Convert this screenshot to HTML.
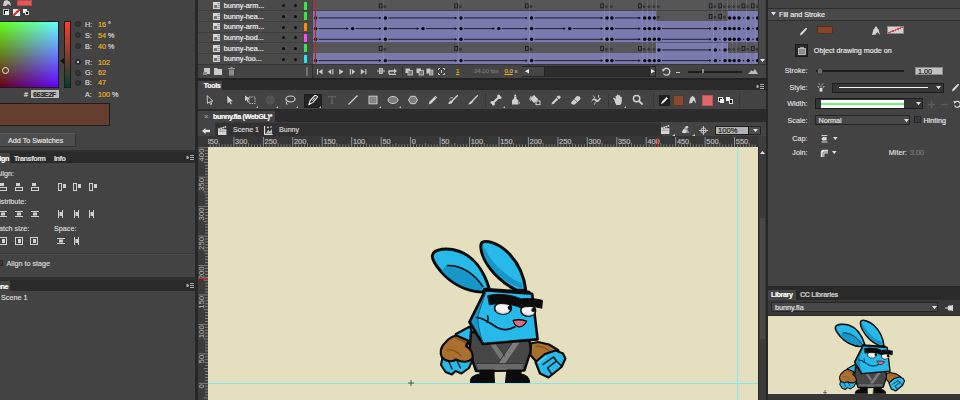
<!DOCTYPE html>
<html lang="en">
<head>
<meta charset="utf-8">
<title>bunny.fla (WebGL)*</title>
<style>
*{box-sizing:border-box;margin:0;padding:0}
html,body{width:960px;height:400px;overflow:hidden;background:#434343}
body{position:relative;font-family:"Liberation Sans",sans-serif;font-size:7.2px;color:#dadada;line-height:1}
.a{position:absolute}
.t{position:absolute;white-space:nowrap;line-height:9px;height:9px;-webkit-text-stroke:0.18px}
.b{font-weight:bold;letter-spacing:-0.4px}
.y{color:#eab21c}
.g{color:#8c8c8c}
svg{position:absolute;overflow:visible}
</style>
</head>
<body>
<!-- left panel -->
<div class="a" style="left:0px;top:0px;width:195px;height:400px;background:#434343;"></div>
<svg style="left:1px;top:0px" width="12" height="7" viewBox="0 0 12 7"><path d="M2 6 L3 1 L6 0 L9 2 L10 6 L7 4 L5 6 Z" fill="#cfcfcf"/></svg>
<div class="a" style="left:17px;top:0px;width:15px;height:6px;background:#e0585a;border:1px solid #b84848"></div>
<div class="a" style="left:3px;top:9px;width:6px;height:6px;background:#111;border:1px solid #bbb"></div>
<div class="a" style="left:5px;top:11px;width:4px;height:4px;background:#eee;"></div>
<div class="a" style="left:13px;top:9px;width:7px;height:7px;background:linear-gradient(135deg,#f4f4f4 42%,#e03030 42%,#e03030 58%,#f4f4f4 58%);"></div>
<div class="a" style="left:23px;top:9px;width:4px;height:4px;background:#eee;"></div>
<div class="a" style="left:25px;top:11px;width:4px;height:4px;background:#111;border:1px solid #ccc"></div>
<div class="a" style="left:-7px;top:21px;width:66px;height:67px;background:linear-gradient(to right,#000,#00f),linear-gradient(to bottom,#0f0,#000),#660000;border:1px solid #1c1c1c;background-blend-mode:screen"></div>
<div class="a" style="left:2px;top:67px;width:7px;height:7px;background:transparent;border:1px solid #e8e8d0;border-radius:50%"></div>
<div class="a" style="left:64px;top:21px;width:7px;height:67px;background:linear-gradient(to bottom,#ff3e2f,#003e2f);border:1px solid #1c1c1c"></div>
<svg style="left:60px;top:58px" width="4" height="6" viewBox="0 0 4 6"><path d="M0 3 L4 0 L4 6 Z" fill="#111"/></svg>
<div class="a" style="left:75px;top:21px;width:6px;height:6px;background:#333;border-radius:50%;border:1px solid #2a2a2a"></div>
<div class="t " style="left:85px;top:19.5px;">H:</div>
<div class="t " style="left:98px;top:19.5px;"><span class="y">16</span> °</div>
<div class="a" style="left:75px;top:32px;width:6px;height:6px;background:#333;border-radius:50%;border:1px solid #2a2a2a"></div>
<div class="t " style="left:85px;top:30.5px;">S:</div>
<div class="t " style="left:98px;top:30.5px;"><span class="y">54</span> %</div>
<div class="a" style="left:75px;top:43px;width:6px;height:6px;background:#333;border-radius:50%;border:1px solid #2a2a2a"></div>
<div class="t " style="left:85px;top:41.5px;">B:</div>
<div class="t " style="left:98px;top:41.5px;"><span class="y">40</span> %</div>
<div class="a" style="left:75px;top:59px;width:6px;height:6px;background:#333;border-radius:50%;border:1px solid #2a2a2a"></div>
<div class="a" style="left:77px;top:61px;width:2px;height:2px;background:#eee;border-radius:50%"></div>
<div class="t " style="left:85px;top:57.5px;">R:</div>
<div class="t " style="left:98px;top:57.5px;"><span class="y">102</span> </div>
<div class="a" style="left:75px;top:69.7px;width:6px;height:6px;background:#333;border-radius:50%;border:1px solid #2a2a2a"></div>
<div class="t " style="left:85px;top:68.2px;">G:</div>
<div class="t " style="left:98px;top:68.2px;"><span class="y">62</span> </div>
<div class="a" style="left:75px;top:79.7px;width:6px;height:6px;background:#333;border-radius:50%;border:1px solid #2a2a2a"></div>
<div class="t " style="left:85px;top:78.2px;">B:</div>
<div class="t " style="left:98px;top:78.2px;"><span class="y">47</span> </div>
<div class="t " style="left:85px;top:89.5px;">A:</div>
<div class="t " style="left:98px;top:89.5px;"><span class="y">100</span> %</div>
<div class="t " style="left:24px;top:89.5px;">#</div>
<div class="a" style="left:31px;top:90px;width:28px;height:8px;background:#bcbcbc;"></div>
<div class="t b" style="left:33px;top:89.5px;color:#222">663E2F</div>
<div class="a" style="left:-1px;top:103px;width:111px;height:23px;background:#663e2f;border:1px solid #1e1e1e"></div>
<div class="a" style="left:-1px;top:133px;width:77px;height:14px;background:#4d4d4d;border:1px solid #333;border-top-color:#5a5a5a;border-radius:1px"></div>
<div class="t " style="left:8px;top:135.5px;color:#e2e2e2">Add To Swatches</div>
<div class="a" style="left:0px;top:150px;width:195px;height:13px;background:#2a2a2a;border-top:2px solid #303030"></div>
<div class="a" style="left:0px;top:153px;width:10px;height:10px;background:#434343;"></div>
<div class="t b" style="left:-7px;top:153.5px;color:#fff">Align</div>
<div class="t b" style="left:14px;top:153.5px;">Transform</div>
<div class="t b" style="left:54px;top:153.5px;">Info</div>
<svg style="left:187px;top:155px" width="7" height="5" viewBox="0 0 7 5"><path d="M0 1 L2 2.5 L0 4Z M3 0.5h4 M3 2.5h4 M3 4.5h4" stroke="#aaa" stroke-width="1" fill="#aaa"/></svg>
<div class="t " style="left:-4px;top:168.5px;">Align:</div>
<div class="t " style="left:-6px;top:196.5px;">Distribute:</div>
<div class="t " style="left:-7px;top:223.5px;">Match size:</div>
<div class="t " style="left:54px;top:223.5px;">Space:</div>
<div class="a" style="left:0px;top:253px;width:195px;height:1px;background:#383838;"></div>
<div class="a" style="left:0px;top:254px;width:195px;height:1px;background:#4c4c4c;"></div>
<div class="a" style="left:-3px;top:260px;width:6px;height:6px;background:#383838;border:1px solid #2a2a2a"></div>
<div class="t " style="left:6.5px;top:258.5px;">Align to stage</div>
<div class="a" style="left:0px;top:277px;width:195px;height:14px;background:#2a2a2a;border-top:3px solid #303030"></div>
<div class="a" style="left:0px;top:281px;width:10px;height:10px;background:#434343;"></div>
<div class="t b" style="left:-11px;top:281.5px;color:#fff">Scene</div>
<svg style="left:187px;top:283px" width="7" height="5" viewBox="0 0 7 5"><path d="M0 1 L2 2.5 L0 4Z M3 0.5h4 M3 2.5h4 M3 4.5h4" stroke="#aaa" stroke-width="1" fill="#aaa"/></svg>
<div class="t " style="left:1px;top:292.5px;">Scene 1</div>
<svg style="left:-1px;top:183px" width="8" height="8" viewBox="0 0 8 8"><rect x="1" y="0" width="4" height="3" fill="#d0d0d0"/><rect x="0.5" y="4.5" width="7" height="3" fill="none" stroke="#d0d0d0"/></svg>
<svg style="left:14.5px;top:183px" width="8" height="8" viewBox="0 0 8 8"><rect x="1" y="0" width="4" height="3" fill="#d0d0d0"/><rect x="0.5" y="4.5" width="7" height="3" fill="none" stroke="#d0d0d0"/></svg>
<svg style="left:31px;top:183px" width="8" height="8" viewBox="0 0 8 8"><rect x="1" y="0" width="4" height="3" fill="#d0d0d0"/><rect x="0.5" y="4.5" width="7" height="3" fill="none" stroke="#d0d0d0"/></svg>
<svg style="left:57.5px;top:183px" width="8" height="8" viewBox="0 0 8 8"><rect x="0.5" y="0.5" width="3" height="7" fill="none" stroke="#d0d0d0"/><rect x="5" y="1" width="3" height="4" fill="#d0d0d0"/></svg>
<svg style="left:73px;top:183px" width="8" height="8" viewBox="0 0 8 8"><rect x="0.5" y="0.5" width="3" height="7" fill="none" stroke="#d0d0d0"/><rect x="5" y="1" width="3" height="4" fill="#d0d0d0"/></svg>
<svg style="left:89px;top:183px" width="8" height="8" viewBox="0 0 8 8"><rect x="0.5" y="0.5" width="3" height="7" fill="none" stroke="#d0d0d0"/><rect x="5" y="1" width="3" height="4" fill="#d0d0d0"/></svg>
<svg style="left:-1px;top:210px" width="8" height="8" viewBox="0 0 8 8"><path d="M0 1.5h8 M0 6.5h8" stroke="#d0d0d0"/><rect x="2" y="2.5" width="4" height="3" fill="#d0d0d0"/></svg>
<svg style="left:14.5px;top:210px" width="8" height="8" viewBox="0 0 8 8"><path d="M0 1.5h8 M0 6.5h8" stroke="#d0d0d0"/><rect x="2" y="2.5" width="4" height="3" fill="#d0d0d0"/></svg>
<svg style="left:31px;top:210px" width="8" height="8" viewBox="0 0 8 8"><path d="M0 1.5h8 M0 6.5h8" stroke="#d0d0d0"/><rect x="2" y="2.5" width="4" height="3" fill="#d0d0d0"/></svg>
<svg style="left:57px;top:210px" width="8" height="8" viewBox="0 0 8 8"><path d="M1.5 0v8 M5.5 0v8" stroke="#d0d0d0"/><rect x="2.5" y="2" width="3" height="4" fill="#d0d0d0"/></svg>
<svg style="left:73px;top:210px" width="8" height="8" viewBox="0 0 8 8"><path d="M1.5 0v8 M5.5 0v8" stroke="#d0d0d0"/><rect x="2.5" y="2" width="3" height="4" fill="#d0d0d0"/></svg>
<svg style="left:88px;top:210px" width="8" height="8" viewBox="0 0 8 8"><path d="M1.5 0v8 M5.5 0v8" stroke="#d0d0d0"/><rect x="2.5" y="2" width="3" height="4" fill="#d0d0d0"/></svg>
<svg style="left:-1px;top:237px" width="8" height="8" viewBox="0 0 8 8"><rect x="0.5" y="0.5" width="7" height="7" fill="none" stroke="#d0d0d0"/><rect x="3" y="2" width="3" height="4" fill="#d0d0d0"/></svg>
<svg style="left:15px;top:237px" width="8" height="8" viewBox="0 0 8 8"><rect x="0.5" y="0.5" width="7" height="7" fill="none" stroke="#d0d0d0"/><rect x="3" y="2" width="3" height="4" fill="#d0d0d0"/></svg>
<svg style="left:30px;top:237px" width="8" height="8" viewBox="0 0 8 8"><rect x="0.5" y="0.5" width="7" height="7" fill="none" stroke="#d0d0d0"/><rect x="3" y="2" width="3" height="4" fill="#d0d0d0"/></svg>
<svg style="left:57px;top:237px" width="8" height="8" viewBox="0 0 8 8"><path d="M0 1.5h8 M0 6.5h8" stroke="#d0d0d0"/><rect x="2" y="2.5" width="4" height="3" fill="#d0d0d0"/></svg>
<svg style="left:73px;top:237px" width="8" height="8" viewBox="0 0 8 8"><path d="M1.5 0v8 M5.5 0v8" stroke="#d0d0d0"/><rect x="2.5" y="2" width="3" height="4" fill="#d0d0d0"/></svg>
<div class="a" style="left:194.8px;top:0px;width:3.6px;height:400px;background:#272727;"></div>
<!-- timeline -->
<div class="a" style="left:198.4px;top:0px;width:567.6px;height:400px;background:#434343;"></div>
<div class="a" style="left:198.4px;top:0px;width:114.1px;height:64px;background:#4a4a4a;"></div>
<div class="a" style="left:312.5px;top:0px;width:445.79999999999995px;height:64px;background:#565656;"></div>
<div class="a" style="left:198.4px;top:10.17px;width:114.1px;height:1px;background:#3e3e3e;"></div>
<svg style="left:213px;top:2.13px" width="7" height="7" viewBox="0 0 7 7"><rect x="0" y="0" width="7" height="7" fill="#d8d8d8"/><rect x="1" y="3" width="3" height="3" fill="#777"/><path d="M4.5 1.5h2 M4.5 3.5h2 M4.5 5.5h2" stroke="#777" stroke-width="0.8"/></svg>
<div class="t " style="left:223.8px;top:0.8300000000000001px;color:#f0f0f0">bunny-arm...</div>
<div class="a" style="left:282.3px;top:4.23px;width:3px;height:3px;background:#0c0c0c;border-radius:50%"></div>
<div class="a" style="left:293.6px;top:4.23px;width:3px;height:3px;background:#0c0c0c;border-radius:50%"></div>
<div class="a" style="left:304px;top:1.63px;width:3.4px;height:8px;background:#3fe04a;border-radius:0.5px"></div>
<div class="a" style="left:312.5px;top:10.17px;width:445.79999999999995px;height:0.8px;background:rgba(40,40,60,0.45);"></div>
<div class="a" style="left:198.4px;top:20.84px;width:114.1px;height:1px;background:#3e3e3e;"></div>
<svg style="left:213px;top:12.8px" width="7" height="7" viewBox="0 0 7 7"><rect x="0" y="0" width="7" height="7" fill="#d8d8d8"/><rect x="1" y="3" width="3" height="3" fill="#777"/><path d="M4.5 1.5h2 M4.5 3.5h2 M4.5 5.5h2" stroke="#777" stroke-width="0.8"/></svg>
<div class="t " style="left:223.8px;top:11.5px;color:#f0f0f0">bunny-hea...</div>
<div class="a" style="left:282.3px;top:14.9px;width:3px;height:3px;background:#0c0c0c;border-radius:50%"></div>
<div class="a" style="left:293.6px;top:14.9px;width:3px;height:3px;background:#0c0c0c;border-radius:50%"></div>
<div class="a" style="left:304px;top:12.3px;width:3.4px;height:8px;background:#3fe04a;border-radius:0.5px"></div>
<div class="a" style="left:312.5px;top:10.67px;width:343.6px;height:10.67px;background:#7a7aae;"></div>
<div class="a" style="left:728px;top:10.67px;width:30.3px;height:10.67px;background:#7a7aae;"></div>
<div class="a" style="left:312.5px;top:20.84px;width:445.79999999999995px;height:0.8px;background:rgba(40,40,60,0.45);"></div>
<div class="a" style="left:198.4px;top:31.51px;width:114.1px;height:1px;background:#3e3e3e;"></div>
<svg style="left:213px;top:23.48px" width="7" height="7" viewBox="0 0 7 7"><rect x="0" y="0" width="7" height="7" fill="#d8d8d8"/><rect x="1" y="3" width="3" height="3" fill="#777"/><path d="M4.5 1.5h2 M4.5 3.5h2 M4.5 5.5h2" stroke="#777" stroke-width="0.8"/></svg>
<div class="t " style="left:223.8px;top:22.18px;color:#f0f0f0">bunny-arm...</div>
<div class="a" style="left:282.3px;top:25.58px;width:3px;height:3px;background:#0c0c0c;border-radius:50%"></div>
<div class="a" style="left:293.6px;top:25.58px;width:3px;height:3px;background:#0c0c0c;border-radius:50%"></div>
<div class="a" style="left:304px;top:22.98px;width:3.4px;height:8px;background:#ff8a10;border-radius:0.5px"></div>
<div class="a" style="left:312.5px;top:21.34px;width:445.8px;height:10.67px;background:#7a7aae;"></div>
<div class="a" style="left:312.5px;top:31.51px;width:445.79999999999995px;height:0.8px;background:rgba(40,40,60,0.45);"></div>
<div class="a" style="left:198.4px;top:42.18px;width:114.1px;height:1px;background:#3e3e3e;"></div>
<svg style="left:213px;top:34.14px" width="7" height="7" viewBox="0 0 7 7"><rect x="0" y="0" width="7" height="7" fill="#d8d8d8"/><rect x="1" y="3" width="3" height="3" fill="#777"/><path d="M4.5 1.5h2 M4.5 3.5h2 M4.5 5.5h2" stroke="#777" stroke-width="0.8"/></svg>
<div class="t " style="left:223.8px;top:32.84px;color:#f0f0f0">bunny-bod...</div>
<div class="a" style="left:282.3px;top:36.24px;width:3px;height:3px;background:#0c0c0c;border-radius:50%"></div>
<div class="a" style="left:293.6px;top:36.24px;width:3px;height:3px;background:#0c0c0c;border-radius:50%"></div>
<div class="a" style="left:304px;top:33.64px;width:3.4px;height:8px;background:#f050f0;border-radius:0.5px"></div>
<div class="a" style="left:312.5px;top:32.01px;width:445.8px;height:10.67px;background:#7a7aae;"></div>
<div class="a" style="left:312.5px;top:42.18px;width:445.79999999999995px;height:0.8px;background:rgba(40,40,60,0.45);"></div>
<div class="a" style="left:198.4px;top:52.85px;width:114.1px;height:1px;background:#3e3e3e;"></div>
<svg style="left:213px;top:44.81px" width="7" height="7" viewBox="0 0 7 7"><rect x="0" y="0" width="7" height="7" fill="#d8d8d8"/><rect x="1" y="3" width="3" height="3" fill="#777"/><path d="M4.5 1.5h2 M4.5 3.5h2 M4.5 5.5h2" stroke="#777" stroke-width="0.8"/></svg>
<div class="t " style="left:223.8px;top:43.52px;color:#f0f0f0">bunny-hea...</div>
<div class="a" style="left:282.3px;top:46.91px;width:3px;height:3px;background:#0c0c0c;border-radius:50%"></div>
<div class="a" style="left:293.6px;top:46.91px;width:3px;height:3px;background:#0c0c0c;border-radius:50%"></div>
<div class="a" style="left:304px;top:44.31px;width:3.4px;height:8px;background:#3fe04a;border-radius:0.5px"></div>
<div class="a" style="left:656.1px;top:42.68px;width:71.9px;height:10.67px;background:#7a7aae;"></div>
<div class="a" style="left:312.5px;top:52.85px;width:445.79999999999995px;height:0.8px;background:rgba(40,40,60,0.45);"></div>
<div class="a" style="left:198.4px;top:63.52px;width:114.1px;height:1px;background:#3e3e3e;"></div>
<svg style="left:213px;top:55.48px" width="7" height="7" viewBox="0 0 7 7"><rect x="0" y="0" width="7" height="7" fill="#d8d8d8"/><rect x="1" y="3" width="3" height="3" fill="#777"/><path d="M4.5 1.5h2 M4.5 3.5h2 M4.5 5.5h2" stroke="#777" stroke-width="0.8"/></svg>
<div class="t " style="left:223.8px;top:54.19px;color:#f0f0f0">bunny-foo...</div>
<div class="a" style="left:282.3px;top:57.59px;width:3px;height:3px;background:#0c0c0c;border-radius:50%"></div>
<div class="a" style="left:293.6px;top:57.59px;width:3px;height:3px;background:#0c0c0c;border-radius:50%"></div>
<div class="a" style="left:304px;top:54.98px;width:3.4px;height:8px;background:#30e0f0;border-radius:0.5px"></div>
<div class="a" style="left:312.5px;top:53.35px;width:445.8px;height:10.67px;background:#7a7aae;"></div>
<div class="a" style="left:312.5px;top:63.52px;width:445.79999999999995px;height:0.8px;background:rgba(40,40,60,0.45);"></div>
<div class="a" style="left:382.8px;top:0px;width:0.6px;height:64px;background:rgba(200,200,230,0.13);"></div>
<div class="a" style="left:458.4px;top:0px;width:0.6px;height:64px;background:rgba(200,200,230,0.13);"></div>
<div class="a" style="left:529.0px;top:0px;width:0.6px;height:64px;background:rgba(200,200,230,0.13);"></div>
<div class="a" style="left:604.4px;top:0px;width:0.6px;height:64px;background:rgba(200,200,230,0.13);"></div>
<div class="a" style="left:609.3px;top:0px;width:0.6px;height:64px;background:rgba(200,200,230,0.13);"></div>
<div class="a" style="left:642.1px;top:0px;width:0.6px;height:64px;background:rgba(200,200,230,0.13);"></div>
<div class="a" style="left:646.8px;top:0px;width:0.6px;height:64px;background:rgba(200,200,230,0.13);"></div>
<div class="a" style="left:651.7px;top:0px;width:0.6px;height:64px;background:rgba(200,200,230,0.13);"></div>
<div class="a" style="left:656.4px;top:0px;width:0.6px;height:64px;background:rgba(200,200,230,0.13);"></div>
<div class="a" style="left:712.8px;top:0px;width:0.6px;height:64px;background:rgba(200,200,230,0.13);"></div>
<div class="a" style="left:722.4px;top:0px;width:0.6px;height:64px;background:rgba(200,200,230,0.13);"></div>
<div class="a" style="left:727.1px;top:0px;width:0.6px;height:64px;background:rgba(200,200,230,0.13);"></div>
<div class="a" style="left:731.6px;top:0px;width:0.6px;height:64px;background:rgba(200,200,230,0.13);"></div>
<div class="a" style="left:736.4px;top:0px;width:0.6px;height:64px;background:rgba(200,200,230,0.13);"></div>
<div class="a" style="left:745.6px;top:0px;width:0.6px;height:64px;background:rgba(200,200,230,0.13);"></div>
<div class="a" style="left:755.0px;top:0px;width:0.6px;height:64px;background:rgba(200,200,230,0.13);"></div>
<svg style="left:0;top:0" width="960" height="64" viewBox="0 0 960 64"><rect x="379.2" y="3.86" width="2.8" height="4" fill="none" stroke="#1c1c1c" stroke-width="0.9"/><circle cx="384.8" cy="6.66" r="1" fill="none" stroke="#222" stroke-width="0.8"/><rect x="454.8" y="3.86" width="2.8" height="4" fill="none" stroke="#1c1c1c" stroke-width="0.9"/><circle cx="460.4" cy="6.66" r="1" fill="none" stroke="#222" stroke-width="0.8"/><rect x="525.4" y="3.86" width="2.8" height="4" fill="none" stroke="#1c1c1c" stroke-width="0.9"/><circle cx="531.0" cy="6.66" r="1" fill="none" stroke="#222" stroke-width="0.8"/><rect x="600.8" y="3.86" width="2.8" height="4" fill="none" stroke="#1c1c1c" stroke-width="0.9"/><circle cx="606.4" cy="6.66" r="1" fill="none" stroke="#222" stroke-width="0.8"/><circle cx="611.3" cy="6.66" r="1" fill="none" stroke="#222" stroke-width="0.8"/><rect x="638.5" y="3.86" width="2.8" height="4" fill="none" stroke="#1c1c1c" stroke-width="0.9"/><circle cx="644.1" cy="6.66" r="1" fill="none" stroke="#222" stroke-width="0.8"/><circle cx="648.8" cy="6.66" r="1" fill="none" stroke="#222" stroke-width="0.8"/><circle cx="653.7" cy="6.66" r="1" fill="none" stroke="#222" stroke-width="0.8"/><circle cx="658.4" cy="6.66" r="1" fill="none" stroke="#222" stroke-width="0.8"/><rect x="709.2" y="3.86" width="2.8" height="4" fill="none" stroke="#1c1c1c" stroke-width="0.9"/><circle cx="714.8" cy="6.66" r="1" fill="none" stroke="#222" stroke-width="0.8"/><rect x="718.8" y="3.86" width="2.8" height="4" fill="none" stroke="#1c1c1c" stroke-width="0.9"/><circle cx="724.4" cy="6.66" r="1" fill="none" stroke="#222" stroke-width="0.8"/><circle cx="729.1" cy="6.66" r="1" fill="none" stroke="#222" stroke-width="0.8"/><circle cx="733.6" cy="6.66" r="1" fill="none" stroke="#222" stroke-width="0.8"/><circle cx="738.4" cy="6.66" r="1" fill="none" stroke="#222" stroke-width="0.8"/><rect x="742.0" y="3.86" width="2.8" height="4" fill="none" stroke="#1c1c1c" stroke-width="0.9"/><circle cx="747.6" cy="6.66" r="1" fill="none" stroke="#222" stroke-width="0.8"/><rect x="751.4" y="3.86" width="2.8" height="4" fill="none" stroke="#1c1c1c" stroke-width="0.9"/><circle cx="757.0" cy="6.66" r="1" fill="none" stroke="#222" stroke-width="0.8"/></svg>
<svg style="left:0;top:0" width="960" height="64" viewBox="0 0 960 64"><circle cx="315.6" cy="17.93" r="1.7" fill="#06060a"/><path d="M318.6 17.93 H380.9" stroke="#14141c" stroke-width="0.9"/><path d="M379.09999999999997 16.63 L381.4 17.93 L379.09999999999997 19.23Z" fill="#14141c"/><circle cx="385.4" cy="17.93" r="1.7" fill="#06060a"/><path d="M388.4 17.93 H456.5" stroke="#14141c" stroke-width="0.9"/><path d="M454.7 16.63 L457 17.93 L454.7 19.23Z" fill="#14141c"/><circle cx="461" cy="17.93" r="1.7" fill="#06060a"/><path d="M464 17.93 H527.1" stroke="#14141c" stroke-width="0.9"/><path d="M525.3000000000001 16.63 L527.6 17.93 L525.3000000000001 19.23Z" fill="#14141c"/><circle cx="531.6" cy="17.93" r="1.7" fill="#06060a"/><path d="M534.6 17.93 H602.5" stroke="#14141c" stroke-width="0.9"/><path d="M600.7 16.63 L603 17.93 L600.7 19.23Z" fill="#14141c"/><circle cx="607" cy="17.93" r="1.7" fill="#06060a"/><circle cx="611.9" cy="17.93" r="1.7" fill="#06060a"/><path d="M614.9 17.93 H640.2" stroke="#14141c" stroke-width="0.9"/><path d="M638.4000000000001 16.63 L640.7 17.93 L638.4000000000001 19.23Z" fill="#14141c"/><circle cx="644.7" cy="17.93" r="1.7" fill="#06060a"/><circle cx="649.4" cy="17.93" r="1.7" fill="#06060a"/><circle cx="654.3" cy="17.93" r="1.7" fill="#06060a"/><circle cx="658.4" cy="17.33" r="1" fill="none" stroke="#222" stroke-width="0.8"/><rect x="709.2" y="14.53" width="2.8" height="4" fill="none" stroke="#1c1c1c" stroke-width="0.9"/><circle cx="714.8" cy="17.33" r="1" fill="none" stroke="#222" stroke-width="0.8"/><rect x="718.8" y="14.53" width="2.8" height="4" fill="none" stroke="#1c1c1c" stroke-width="0.9"/><circle cx="724.4" cy="17.33" r="1" fill="none" stroke="#222" stroke-width="0.8"/><circle cx="729.7" cy="17.93" r="1.7" fill="#06060a"/><circle cx="734.2" cy="17.93" r="1.7" fill="#06060a"/><circle cx="739" cy="17.93" r="1.7" fill="#06060a"/><circle cx="748.2" cy="17.93" r="1.7" fill="#06060a"/><circle cx="757.6" cy="17.93" r="1.7" fill="#06060a"/><circle cx="743.5" cy="17.93" r="0.8" fill="#1a1a2a"/><circle cx="753" cy="17.93" r="0.8" fill="#1a1a2a"/></svg>
<svg style="left:0;top:0" width="960" height="64" viewBox="0 0 960 64"><circle cx="315.6" cy="28.6" r="1.7" fill="#06060a"/><path d="M318.6 28.6 H348.1" stroke="#14141c" stroke-width="0.9"/><path d="M346.3 27.3 L348.6 28.6 L346.3 29.900000000000002Z" fill="#14141c"/><circle cx="352.6" cy="28.6" r="1.7" fill="#06060a"/><path d="M355.6 28.6 H380.9" stroke="#14141c" stroke-width="0.9"/><path d="M379.09999999999997 27.3 L381.4 28.6 L379.09999999999997 29.900000000000002Z" fill="#14141c"/><circle cx="385.4" cy="28.6" r="1.7" fill="#06060a"/><path d="M388.4 28.6 H418.5" stroke="#14141c" stroke-width="0.9"/><path d="M416.7 27.3 L419 28.6 L416.7 29.900000000000002Z" fill="#14141c"/><circle cx="423" cy="28.6" r="1.7" fill="#06060a"/><path d="M426 28.6 H456.5" stroke="#14141c" stroke-width="0.9"/><path d="M454.7 27.3 L457 28.6 L454.7 29.900000000000002Z" fill="#14141c"/><circle cx="461" cy="28.6" r="1.7" fill="#06060a"/><path d="M464 28.6 H494.3" stroke="#14141c" stroke-width="0.9"/><path d="M492.5 27.3 L494.8 28.6 L492.5 29.900000000000002Z" fill="#14141c"/><circle cx="498.8" cy="28.6" r="1.7" fill="#06060a"/><path d="M501.8 28.6 H527.1" stroke="#14141c" stroke-width="0.9"/><path d="M525.3000000000001 27.3 L527.6 28.6 L525.3000000000001 29.900000000000002Z" fill="#14141c"/><circle cx="531.6" cy="28.6" r="1.7" fill="#06060a"/><path d="M534.6 28.6 H565.2" stroke="#14141c" stroke-width="0.9"/><path d="M563.4000000000001 27.3 L565.7 28.6 L563.4000000000001 29.900000000000002Z" fill="#14141c"/><circle cx="569.7" cy="28.6" r="1.7" fill="#06060a"/><path d="M572.7 28.6 H602.5" stroke="#14141c" stroke-width="0.9"/><path d="M600.7 27.3 L603 28.6 L600.7 29.900000000000002Z" fill="#14141c"/><circle cx="607" cy="28.6" r="1.7" fill="#06060a"/><circle cx="611.9" cy="28.6" r="1.7" fill="#06060a"/><path d="M614.9 28.6 H640.2" stroke="#14141c" stroke-width="0.9"/><path d="M638.4000000000001 27.3 L640.7 28.6 L638.4000000000001 29.900000000000002Z" fill="#14141c"/><circle cx="644.7" cy="28.6" r="1.7" fill="#06060a"/><circle cx="649.4" cy="28.6" r="1.7" fill="#06060a"/><circle cx="654.3" cy="28.6" r="1.7" fill="#06060a"/><circle cx="659" cy="28.6" r="1.7" fill="#06060a"/><path d="M662 28.6 H710.9" stroke="#14141c" stroke-width="0.9"/><path d="M709.1 27.3 L711.4 28.6 L709.1 29.900000000000002Z" fill="#14141c"/><circle cx="715.4" cy="28.6" r="1.7" fill="#06060a"/><circle cx="725" cy="28.6" r="1.7" fill="#06060a"/><circle cx="729.7" cy="28.6" r="1.7" fill="#06060a"/><circle cx="734.2" cy="28.6" r="1.7" fill="#06060a"/><circle cx="739" cy="28.6" r="1.7" fill="#06060a"/><circle cx="748.2" cy="28.6" r="1.7" fill="#06060a"/><circle cx="757.6" cy="28.6" r="1.7" fill="#06060a"/><circle cx="719.8" cy="28.6" r="0.8" fill="#1a1a2a"/><circle cx="743.5" cy="28.6" r="0.8" fill="#1a1a2a"/><circle cx="753" cy="28.6" r="0.8" fill="#1a1a2a"/></svg>
<svg style="left:0;top:0" width="960" height="64" viewBox="0 0 960 64"><circle cx="315.6" cy="39.27" r="1.7" fill="#06060a"/><path d="M318.6 39.27 H380.9" stroke="#14141c" stroke-width="0.9"/><path d="M379.09999999999997 37.970000000000006 L381.4 39.27 L379.09999999999997 40.57Z" fill="#14141c"/><circle cx="385.4" cy="39.27" r="1.7" fill="#06060a"/><path d="M388.4 39.27 H456.5" stroke="#14141c" stroke-width="0.9"/><path d="M454.7 37.970000000000006 L457 39.27 L454.7 40.57Z" fill="#14141c"/><circle cx="461" cy="39.27" r="1.7" fill="#06060a"/><path d="M464 39.27 H527.1" stroke="#14141c" stroke-width="0.9"/><path d="M525.3000000000001 37.970000000000006 L527.6 39.27 L525.3000000000001 40.57Z" fill="#14141c"/><circle cx="531.6" cy="39.27" r="1.7" fill="#06060a"/><path d="M534.6 39.27 H602.5" stroke="#14141c" stroke-width="0.9"/><path d="M600.7 37.970000000000006 L603 39.27 L600.7 40.57Z" fill="#14141c"/><circle cx="607" cy="39.27" r="1.7" fill="#06060a"/><circle cx="611.9" cy="39.27" r="1.7" fill="#06060a"/><path d="M614.9 39.27 H640.2" stroke="#14141c" stroke-width="0.9"/><path d="M638.4000000000001 37.970000000000006 L640.7 39.27 L638.4000000000001 40.57Z" fill="#14141c"/><circle cx="644.7" cy="39.27" r="1.7" fill="#06060a"/><circle cx="649.4" cy="39.27" r="1.7" fill="#06060a"/><circle cx="654.3" cy="39.27" r="1.7" fill="#06060a"/><circle cx="659" cy="39.27" r="1.7" fill="#06060a"/><path d="M662 39.27 H710.9" stroke="#14141c" stroke-width="0.9"/><path d="M709.1 37.970000000000006 L711.4 39.27 L709.1 40.57Z" fill="#14141c"/><circle cx="715.4" cy="39.27" r="1.7" fill="#06060a"/><circle cx="725" cy="39.27" r="1.7" fill="#06060a"/><circle cx="729.7" cy="39.27" r="1.7" fill="#06060a"/><circle cx="734.2" cy="39.27" r="1.7" fill="#06060a"/><circle cx="739" cy="39.27" r="1.7" fill="#06060a"/><circle cx="748.2" cy="39.27" r="1.7" fill="#06060a"/><circle cx="757.6" cy="39.27" r="1.7" fill="#06060a"/><circle cx="719.8" cy="39.27" r="0.8" fill="#1a1a2a"/><circle cx="743.5" cy="39.27" r="0.8" fill="#1a1a2a"/><circle cx="753" cy="39.27" r="0.8" fill="#1a1a2a"/></svg>
<svg style="left:0;top:0" width="960" height="64" viewBox="0 0 960 64"><rect x="379.2" y="46.54" width="2.8" height="4" fill="none" stroke="#1c1c1c" stroke-width="0.9"/><circle cx="384.8" cy="49.339999999999996" r="1" fill="none" stroke="#222" stroke-width="0.8"/><rect x="454.8" y="46.54" width="2.8" height="4" fill="none" stroke="#1c1c1c" stroke-width="0.9"/><circle cx="460.4" cy="49.339999999999996" r="1" fill="none" stroke="#222" stroke-width="0.8"/><rect x="525.4" y="46.54" width="2.8" height="4" fill="none" stroke="#1c1c1c" stroke-width="0.9"/><circle cx="531.0" cy="49.339999999999996" r="1" fill="none" stroke="#222" stroke-width="0.8"/><rect x="600.8" y="46.54" width="2.8" height="4" fill="none" stroke="#1c1c1c" stroke-width="0.9"/><circle cx="606.4" cy="49.339999999999996" r="1" fill="none" stroke="#222" stroke-width="0.8"/><circle cx="611.3" cy="49.339999999999996" r="1" fill="none" stroke="#222" stroke-width="0.8"/><rect x="638.5" y="46.54" width="2.8" height="4" fill="none" stroke="#1c1c1c" stroke-width="0.9"/><circle cx="644.1" cy="49.339999999999996" r="1" fill="none" stroke="#222" stroke-width="0.8"/><circle cx="648.8" cy="49.339999999999996" r="1" fill="none" stroke="#222" stroke-width="0.8"/><circle cx="653.7" cy="49.339999999999996" r="1" fill="none" stroke="#222" stroke-width="0.8"/><circle cx="659" cy="49.94" r="1.7" fill="#06060a"/><path d="M662 49.94 H710.9" stroke="#14141c" stroke-width="0.9"/><path d="M709.1 48.64 L711.4 49.94 L709.1 51.239999999999995Z" fill="#14141c"/><circle cx="715.4" cy="49.94" r="1.7" fill="#06060a"/><circle cx="725" cy="49.94" r="1.7" fill="#06060a"/><circle cx="729.1" cy="49.339999999999996" r="1" fill="none" stroke="#222" stroke-width="0.8"/><circle cx="733.6" cy="49.339999999999996" r="1" fill="none" stroke="#222" stroke-width="0.8"/><circle cx="738.4" cy="49.339999999999996" r="1" fill="none" stroke="#222" stroke-width="0.8"/><rect x="742.0" y="46.54" width="2.8" height="4" fill="none" stroke="#1c1c1c" stroke-width="0.9"/><circle cx="747.6" cy="49.339999999999996" r="1" fill="none" stroke="#222" stroke-width="0.8"/><rect x="751.4" y="46.54" width="2.8" height="4" fill="none" stroke="#1c1c1c" stroke-width="0.9"/><circle cx="757.0" cy="49.339999999999996" r="1" fill="none" stroke="#222" stroke-width="0.8"/><circle cx="719.8" cy="49.94" r="0.8" fill="#1a1a2a"/></svg>
<svg style="left:0;top:0" width="960" height="64" viewBox="0 0 960 64"><circle cx="315.6" cy="60.61" r="1.7" fill="#06060a"/><path d="M318.6 60.61 H380.9" stroke="#14141c" stroke-width="0.9"/><path d="M379.09999999999997 59.31 L381.4 60.61 L379.09999999999997 61.91Z" fill="#14141c"/><circle cx="385.4" cy="60.61" r="1.7" fill="#06060a"/><path d="M388.4 60.61 H456.5" stroke="#14141c" stroke-width="0.9"/><path d="M454.7 59.31 L457 60.61 L454.7 61.91Z" fill="#14141c"/><circle cx="461" cy="60.61" r="1.7" fill="#06060a"/><path d="M464 60.61 H527.1" stroke="#14141c" stroke-width="0.9"/><path d="M525.3000000000001 59.31 L527.6 60.61 L525.3000000000001 61.91Z" fill="#14141c"/><circle cx="531.6" cy="60.61" r="1.7" fill="#06060a"/><path d="M534.6 60.61 H602.5" stroke="#14141c" stroke-width="0.9"/><path d="M600.7 59.31 L603 60.61 L600.7 61.91Z" fill="#14141c"/><circle cx="607" cy="60.61" r="1.7" fill="#06060a"/><circle cx="611.9" cy="60.61" r="1.7" fill="#06060a"/><path d="M614.9 60.61 H640.2" stroke="#14141c" stroke-width="0.9"/><path d="M638.4000000000001 59.31 L640.7 60.61 L638.4000000000001 61.91Z" fill="#14141c"/><circle cx="644.7" cy="60.61" r="1.7" fill="#06060a"/><circle cx="649.4" cy="60.61" r="1.7" fill="#06060a"/><circle cx="654.3" cy="60.61" r="1.7" fill="#06060a"/><circle cx="659" cy="60.61" r="1.7" fill="#06060a"/><path d="M662 60.61 H710.9" stroke="#14141c" stroke-width="0.9"/><path d="M709.1 59.31 L711.4 60.61 L709.1 61.91Z" fill="#14141c"/><circle cx="715.4" cy="60.61" r="1.7" fill="#06060a"/><circle cx="725" cy="60.61" r="1.7" fill="#06060a"/><circle cx="729.7" cy="60.61" r="1.7" fill="#06060a"/><circle cx="734.2" cy="60.61" r="1.7" fill="#06060a"/><circle cx="739" cy="60.61" r="1.7" fill="#06060a"/><circle cx="748.2" cy="60.61" r="1.7" fill="#06060a"/><circle cx="757.6" cy="60.61" r="1.7" fill="#06060a"/><circle cx="719.8" cy="60.61" r="0.8" fill="#1a1a2a"/><circle cx="743.5" cy="60.61" r="0.8" fill="#1a1a2a"/><circle cx="753" cy="60.61" r="0.8" fill="#1a1a2a"/></svg>
<div class="a" style="left:313.8px;top:0px;width:2.6px;height:64px;background:rgba(200,60,60,0.3);"></div>
<div class="a" style="left:314.6px;top:0px;width:0.9px;height:64px;background:#b42424;"></div>
<div class="a" style="left:758.3px;top:0px;width:7px;height:64px;background:#484848;border-left:1px solid #333"></div>
<svg style="left:759.8px;top:59px" width="5" height="3" viewBox="0 0 5 3"><path d="M0 0h5L2.5 3Z" fill="#e6e6e6"/></svg>
<div class="a" style="left:198.4px;top:64px;width:567.6px;height:14px;background:#434343;border-top:1px solid #343434"></div>
<svg style="left:203px;top:67px" width="9" height="8" viewBox="0 0 9 8"><rect x="1" y="1" width="6" height="6" fill="#cacaca"/><rect x="0" y="5" width="4" height="3" fill="#888"/></svg>
<svg style="left:214px;top:67px" width="9" height="8" viewBox="0 0 9 8"><path d="M0 1h3l1 1h4v6h-8z" fill="#cacaca"/></svg>
<svg style="left:227.5px;top:66.5px" width="7" height="9" viewBox="0 0 7 9"><path d="M0 1.5h7M2.5 0.5h2" stroke="#9a9a9a"/><rect x="1" y="2.5" width="5" height="6" fill="#8c8c8c"/></svg>
<div class="a" style="left:306px;top:66.5px;width:2.4px;height:9px;background:#707070;"></div>
<div class="a" style="left:311.5px;top:64px;width:0.8px;height:14px;background:#2e2e2e;"></div>
<svg style="left:317.1px;top:68.6px" width="6.4" height="5.6" viewBox="0 0 8 7"><path d="M0 0h1.4v7H0z M7 0v7L2 3.5z" fill="#cacaca"/></svg>
<svg style="left:328.4px;top:68.6px" width="6.4" height="5.6" viewBox="0 0 8 7"><path d="M4 0v7L0 3.5z M5.4 0h1.4v7H5.4z" fill="#cacaca"/></svg>
<svg style="left:338.3px;top:68.6px" width="6.4" height="5.6" viewBox="0 0 8 7"><path d="M1.5 0v7L7 3.5z" fill="#cacaca"/></svg>
<svg style="left:348.8px;top:68.6px" width="6.4" height="5.6" viewBox="0 0 8 7"><path d="M1 0h1.4v7H1z M3.6 0v7L7.6 3.5z" fill="#cacaca"/></svg>
<svg style="left:359.8px;top:68.6px" width="6.4" height="5.6" viewBox="0 0 8 7"><path d="M1 0v7L6 3.5z M6.6 0H8v7H6.6z" fill="#cacaca"/></svg>
<svg style="left:376.5px;top:68px" width="8" height="6" viewBox="0 0 8 6"><path d="M0 3h8" stroke="#cacaca"/><rect x="2.5" y="0.5" width="3" height="5" fill="#999" stroke="#cacaca" stroke-width="0.8"/></svg>
<svg style="left:388px;top:67.5px" width="9" height="7" viewBox="0 0 9 7"><path d="M1 6V3h6" stroke="#cacaca" fill="none" stroke-width="1.3"/><path d="M6 0.5L9 3L6 5.5z" fill="#cacaca"/><path d="M1 6.3h7" stroke="#cacaca" stroke-width="1.3"/></svg>
<div class="a" style="left:401.5px;top:66px;width:0.8px;height:11px;background:#333;"></div>
<svg style="left:404.5px;top:67.5px" width="8" height="7" viewBox="0 0 8 7"><rect x="0.5" y="0.5" width="4.5" height="4.5" fill="#cacaca"/><rect x="3" y="2.5" width="4.5" height="4.5" fill="#777" stroke="#cacaca" stroke-width="0.8"/></svg>
<svg style="left:415.6px;top:67.5px" width="8" height="7" viewBox="0 0 8 7"><rect x="0.5" y="0.5" width="4.5" height="4.5" fill="#cacaca"/><rect x="3" y="2.5" width="4.5" height="4.5" fill="#777" stroke="#cacaca" stroke-width="0.8"/></svg>
<svg style="left:426px;top:67.5px" width="8" height="7" viewBox="0 0 8 7"><rect x="0.5" y="0.5" width="4" height="5" fill="#cacaca"/><rect x="3.5" y="2" width="3.5" height="5" fill="#999" stroke="#cacaca" stroke-width="0.6"/></svg>
<svg style="left:437.5px;top:67.5px" width="7" height="7" viewBox="0 0 7 7"><path d="M0.5 2V0.5H2 M5 0.5h1.5V2 M6.5 5v1.5H5 M2 6.5H0.5V5" fill="none" stroke="#cacaca"/><path d="M3.5 2v3" stroke="#cacaca"/></svg>
<div class="t y" style="left:456px;top:66.8px;text-decoration:underline;font-size:6px">1</div>
<div class="t g" style="left:474px;top:66.8px;color:#757575;font-size:6px">24.00 fps</div>
<div class="t " style="left:504.4px;top:66.8px;font-size:6px"><span class="y" style="text-decoration:underline">0.0</span><span style="color:#aaa"> s</span></div>
<div class="a" style="left:521.5px;top:66px;width:134px;height:10.5px;background:#2c2c2c;border:1px solid #242424"></div>
<div class="a" style="left:522px;top:66.5px;width:23px;height:9.5px;background:#454545;border-right:1px solid #222"></div>
<svg style="left:524.5px;top:69px" width="4" height="4.4" viewBox="0 0 4 4.4"><path d="M0 2.2L4 0v4.4z" fill="#e8e8e8"/></svg>
<div class="a" style="left:648.5px;top:66.5px;width:6.5px;height:9.5px;background:#454545;border-left:1px solid #222"></div>
<svg style="left:650.5px;top:69px" width="4" height="4.4" viewBox="0 0 4 4.4"><path d="M4 2.2L0 0v4.4z" fill="#e8e8e8"/></svg>
<svg style="left:662px;top:66.5px" width="9" height="9" viewBox="0 0 9 9"><path d="M1.5 6.5A3.4 3.4 0 1 0 1.2 3.6" fill="none" stroke="#cacaca" stroke-width="1.4"/><path d="M0 2l3.2 0.2L1 5z" fill="#cacaca"/></svg>
<div class="a" style="left:676px;top:71.8px;width:4px;height:1.6px;background:#c8c8c8;"></div>
<div class="a" style="left:688px;top:71px;width:53.5px;height:2px;background:#1e1e1e;"></div>
<div class="a" style="left:702px;top:68.5px;width:2px;height:4px;background:#8a8a8a;"></div>
<svg style="left:747.5px;top:68.5px" width="10" height="5" viewBox="0 0 10 5"><path d="M0 5L3.5 1.2L5 2.6L7 0L10 5z" fill="#bdbdbd"/></svg>
<div class="a" style="left:198.4px;top:78px;width:567.6px;height:12px;background:#2a2a2a;border-top:2px solid #232323"></div>
<div class="a" style="left:198.4px;top:80.5px;width:24.1px;height:9.5px;background:#434343;"></div>
<div class="t b" style="left:203.8px;top:81.3px;color:#fff">Tools</div>
<svg style="left:757px;top:83.5px" width="7" height="5" viewBox="0 0 7 5"><path d="M0 1 L2 2.5 L0 4Z M3 0.5h4 M3 2.5h4 M3 4.5h4" stroke="#aaa" stroke-width="1" fill="#aaa"/></svg>
<!-- toolbar -->
<div class="a" style="left:198.4px;top:90px;width:567.6px;height:18.5px;background:#434343;"></div>
<svg style="left:205.4px;top:94.8px" width="10.3" height="10.3" viewBox="0 0 12 12"><path d="M2.5 0.8L9.3 7.2L6.4 7.4L7.9 10.6L6.6 11.2L5.1 8L2.9 9.9z" fill="#3a3a3a" stroke="#cfcfcf" stroke-width="1.1"/></svg>
<svg style="left:225.4px;top:94.8px" width="10.3" height="10.3" viewBox="0 0 12 12"><path d="M2.5 0.8L9.3 7.2L6.4 7.4L7.9 10.6L6.6 11.2L5.1 8L2.9 9.9z" fill="#cfcfcf"/></svg>
<svg style="left:244.4px;top:94.0px" width="12.0" height="12.0" viewBox="0 0 12 12"><path d="M1 1.5L6 5L3.6 5.4L4.8 8L3.8 8.4L2.6 5.8L1 7.3z" fill="#cfcfcf"/><rect x="5" y="3" width="6" height="6.5" fill="none" stroke="#cfcfcf" stroke-width="0.9" stroke-dasharray="1.4 1"/></svg>
<svg style="left:255.9px;top:105.5px" width="2" height="2" viewBox="0 0 2 2"><path d="M0 2h2V0z" fill="#bbb"/></svg>
<svg style="left:264.0px;top:94.0px" width="12.0" height="12.0" viewBox="0 0 12 12"><circle cx="6" cy="6" r="4.6" fill="#555"/><path d="M6 1.5v9M1.5 6h9" stroke="#4a4a4a" stroke-width="0.8"/></svg>
<svg style="left:275.5px;top:105.5px" width="2" height="2" viewBox="0 0 2 2"><path d="M0 2h2V0z" fill="#bbb"/></svg>
<svg style="left:284.4px;top:94.0px" width="12.0" height="12.0" viewBox="0 0 12 12"><ellipse cx="6.5" cy="5" rx="4.6" ry="3" fill="none" stroke="#cfcfcf" stroke-width="1.2"/><path d="M3 7.5Q1.5 9 3.2 10.8" fill="none" stroke="#cfcfcf" stroke-width="1"/></svg>
<svg style="left:295.9px;top:105.5px" width="2" height="2" viewBox="0 0 2 2"><path d="M0 2h2V0z" fill="#bbb"/></svg>
<div class="a" style="left:304px;top:93.5px;width:17.5px;height:14px;background:#232323;border:1px solid #1b1b1b"></div>
<svg style="left:306.8px;top:94.0px" width="12.0" height="12.0" viewBox="0 0 12 12"><path d="M2 10.5L3.2 6.5L7.8 1.6Q9.6 1 10.6 3L6 8.4z" fill="none" stroke="#f0f0f0" stroke-width="1.1"/><path d="M5.4 6.6L8.2 3.6" stroke="#f0f0f0" stroke-width="0.9"/><circle cx="2.3" cy="10.2" r="0.8" fill="#f0f0f0"/></svg>
<svg style="left:319.0px;top:105.5px" width="2" height="2" viewBox="0 0 2 2"><path d="M0 2h2V0z" fill="#bbb"/></svg>
<div class="t" style="left:328px;top:92.5px;height:14px;line-height:14px;font-family:'Liberation Serif',serif;font-size:13px;color:#676767">T</div>
<svg style="left:346.5px;top:94.0px" width="12.0" height="12.0" viewBox="0 0 12 12"><path d="M1.5 10.5L10.5 1.5" stroke="#cfcfcf" stroke-width="1.3"/></svg>
<svg style="left:366.5px;top:94.0px" width="12.0" height="12.0" viewBox="0 0 12 12"><rect x="2" y="2.2" width="8" height="7.6" fill="#7c7c7c" stroke="#cfcfcf" stroke-width="1"/><path d="M4.7 2.2v7.6M7.4 2.2v7.6M2 4.8h8M2 7.3h8" stroke="#999" stroke-width="0.4"/></svg>
<svg style="left:378.5px;top:105.5px" width="2" height="2" viewBox="0 0 2 2"><path d="M0 2h2V0z" fill="#bbb"/></svg>
<svg style="left:387.0px;top:94.0px" width="12.0" height="12.0" viewBox="0 0 12 12"><ellipse cx="6" cy="6" rx="5" ry="3.5" fill="#7c7c7c" stroke="#cfcfcf" stroke-width="1"/></svg>
<svg style="left:399.0px;top:105.5px" width="2" height="2" viewBox="0 0 2 2"><path d="M0 2h2V0z" fill="#bbb"/></svg>
<svg style="left:406.7px;top:94.0px" width="12.0" height="12.0" viewBox="0 0 12 12"><path d="M3.8 2.3h4.4l2.3 3.7l-2.3 3.7H3.8L1.5 6z" fill="#7c7c7c" stroke="#cfcfcf" stroke-width="1"/></svg>
<svg style="left:426.5px;top:94.0px" width="12.0" height="12.0" viewBox="0 0 12 12"><path d="M1.5 10.5L2.6 7.6L8.4 1.8L10.2 3.6L4.4 9.4z" fill="#cfcfcf"/><path d="M7.6 2.6l1.8 1.8" stroke="#555" stroke-width="0.7"/></svg>
<svg style="left:447.0px;top:94.0px" width="12.0" height="12.0" viewBox="0 0 12 12"><path d="M10.8 1.2L5 7" stroke="#cfcfcf" stroke-width="1.5"/><path d="M5.4 6.4Q2 6.6 1.2 9.8Q4.6 10.4 6.2 7.4z" fill="#cfcfcf"/><path d="M2 5.5Q3.5 3 6 3.8" fill="none" stroke="#cfcfcf" stroke-width="0.8"/></svg>
<svg style="left:467.0px;top:94.0px" width="12.0" height="12.0" viewBox="0 0 12 12"><path d="M10.8 1.2L5.2 7" stroke="#cfcfcf" stroke-width="1.3"/><path d="M5.6 6.2Q3 7 1 10.6Q5 10 6.6 7.2z" fill="#cfcfcf"/></svg>
<div class="a" style="left:485px;top:93px;width:0.8px;height:14px;background:#363636;"></div>
<svg style="left:490.0px;top:94.0px" width="12.0" height="12.0" viewBox="0 0 12 12"><path d="M2.2 9.8L9.8 2.2" stroke="#cfcfcf" stroke-width="2.2"/><circle cx="2" cy="8.6" r="1.5" fill="#cfcfcf"/><circle cx="3.4" cy="10" r="1.5" fill="#cfcfcf"/><circle cx="8.6" cy="2" r="1.5" fill="#cfcfcf"/><circle cx="10" cy="3.4" r="1.5" fill="#cfcfcf"/></svg>
<svg style="left:502.5px;top:105.5px" width="2" height="2" viewBox="0 0 2 2"><path d="M0 2h2V0z" fill="#bbb"/></svg>
<svg style="left:509.0px;top:94.0px" width="12.0" height="12.0" viewBox="0 0 12 12"><path d="M3 10.5V6.5L5 4.5V2.5h2.4v2L9.4 6.5v4z" fill="#cfcfcf"/><circle cx="6.2" cy="1.4" r="1" fill="#cfcfcf"/><path d="M10.4 7.5q1 1.6 0 2.6q-1-1 0-2.6z" fill="#cfcfcf"/></svg>
<svg style="left:529.0px;top:94.0px" width="12.0" height="12.0" viewBox="0 0 12 12"><path d="M1 4.5L5 1l4.4 4.4L5 9z" fill="#cfcfcf"/><path d="M2.2 2Q0 4.6 1.4 6.8" stroke="#cfcfcf" fill="none" stroke-width="0.9"/><rect x="7" y="7" width="4" height="3.6" fill="none" stroke="#cfcfcf" stroke-width="1"/></svg>
<svg style="left:550.0px;top:94.0px" width="12.0" height="12.0" viewBox="0 0 12 12"><path d="M1.4 10.6L2 8.4L6.6 3.8L8.2 5.4L3.6 10z" fill="#cfcfcf"/><path d="M6.4 2.8L9.2 5.6L10.6 3.2Q10.8 1.4 8.8 1.4z" fill="#cfcfcf"/></svg>
<svg style="left:570.0px;top:94.0px" width="12.0" height="12.0" viewBox="0 0 12 12"><path d="M1.2 8.2L6.6 2.2Q8 1.4 9.6 2.6Q11.2 4 10.2 5.4L4.8 10.6Q3 11 1.8 10Q0.8 9.2 1.2 8.2z" fill="#cfcfcf"/><path d="M4 5.2l3.4 3" stroke="#6a6a6a" stroke-width="0.8"/></svg>
<svg style="left:590.0px;top:94.0px" width="12.0" height="12.0" viewBox="0 0 12 12"><path d="M1 8.5Q3.4 4 5.6 7.4Q7.6 9.6 11 4.4L9.8 3.4Q7.6 7.2 6.4 5.6Q3.4 1.6 1 8.5z" fill="#cfcfcf"/><path d="M3 1.5l2 2.4 M8.8 1l-0.4 2.6 M4.4 10.6l0.8-2.4" stroke="#cfcfcf" stroke-width="0.9"/></svg>
<div class="a" style="left:607.5px;top:93px;width:0.8px;height:14px;background:#363636;"></div>
<svg style="left:611.5px;top:94.0px" width="12.0" height="12.0" viewBox="0 0 12 12"><path d="M2.4 6.2L1 4.2Q1.6 3.2 2.6 4L3.6 5.4V2Q4.3 1 5 2V1Q5.8 0 6.6 1V1.6Q7.4 0.8 8.2 1.8V3Q9 2.2 9.8 3.2V7.6Q9.6 10 8 11H4.4Q3 9 2.4 6.2z" fill="#cfcfcf"/></svg>
<svg style="left:624.0px;top:105.5px" width="2" height="2" viewBox="0 0 2 2"><path d="M0 2h2V0z" fill="#bbb"/></svg>
<svg style="left:631.5px;top:94.0px" width="12.0" height="12.0" viewBox="0 0 12 12"><circle cx="4.6" cy="4.6" r="3.2" fill="none" stroke="#cfcfcf" stroke-width="1.5"/><path d="M7 7L10.6 10.6" stroke="#cfcfcf" stroke-width="1.9"/></svg>
<div class="a" style="left:652.5px;top:93px;width:0.8px;height:14px;background:#363636;"></div>
<div class="a" style="left:658.7px;top:94.6px;width:11.5px;height:11px;background:#1f1f1f;"></div>
<svg style="left:660px;top:95.5px" width="9" height="9" viewBox="0 0 9 9"><path d="M1 8L1.8 5.8L6.6 1L8 2.4L3.2 7.2z" fill="#ececec"/></svg>
<div class="a" style="left:672.5px;top:94.6px;width:11.4px;height:11px;background:#874a30;border:1px solid #5e3422"></div>
<svg style="left:688px;top:95px" width="9" height="10" viewBox="0 0 9 10"><path d="M1 8.5L2.2 3L4.6 0.8L7 3L8 8.5L5.6 5.6L4 8z" fill="#cfcfcf"/></svg>
<div class="a" style="left:702px;top:94.6px;width:11px;height:11px;background:#e0666c;border:1px solid #c25258"></div>
<div class="a" style="left:717.5px;top:96.5px;width:5px;height:5px;background:#111;border:1px solid #ddd"></div>
<div class="a" style="left:720px;top:99px;width:4px;height:4px;background:#f2f2f2;"></div>
<div class="a" style="left:726px;top:96.5px;width:4px;height:4px;background:#f2f2f2;"></div>
<div class="a" style="left:728.5px;top:99px;width:4.5px;height:4.5px;background:#111;border:1px solid #ddd"></div>
<div class="a" style="left:739px;top:93px;width:0.8px;height:14px;background:#363636;"></div>
<div class="a" style="left:198.4px;top:108.5px;width:567.6px;height:13.5px;background:#2b2b2b;"></div>
<div class="a" style="left:198.4px;top:111px;width:77.1px;height:11px;background:#434343;"></div>
<div class="t " style="left:204px;top:111.8px;color:#9a9a9a;font-size:8px">×</div>
<div class="t b" style="left:213px;top:112.0px;color:#fff">bunny.fla (WebGL)*</div>
<div class="a" style="left:198.4px;top:122px;width:567.6px;height:14.4px;background:#434343;"></div>
<div class="a" style="left:215px;top:122px;width:446px;height:14.4px;background:#313131;border-top:1px solid #3a3a3a"></div>
<svg style="left:202px;top:128px" width="8" height="6" viewBox="0 0 8 6"><path d="M0 3L3.6 0v1.8H8v2.4H3.6V6z" fill="#e0e0e0"/></svg>
<svg style="left:218px;top:126px" width="9" height="9" viewBox="0 0 9 9"><path d="M0 3.2h8.4V9H0z" fill="#d6d6d6"/><path d="M0 2.6L8 0l0.5 1.6L0.4 4.1z" fill="#d6d6d6"/><path d="M1.5 2.2l1.2 1.1 M3.8 1.5l1.2 1.1 M6.1 0.8l1.2 1.1" stroke="#333" stroke-width="0.9"/><path d="M1 5.2h6.4" stroke="#666" stroke-width="0.6"/></svg>
<div class="t " style="left:233px;top:126.30000000000001px;color:#d8d8d8;font-size:7.1px">Scene 1</div>
<svg style="left:264px;top:126px" width="9" height="9" viewBox="0 0 9 9"><path d="M0.6 0v8.4H8.6" fill="none" stroke="#dcdcdc" stroke-width="1.2"/><path d="M2 7.5L4.2 3.8L6 5.6L8 2.8V7.5z" fill="#bdbdbd"/><circle cx="4" cy="1.4" r="0.9" fill="#dcdcdc"/><circle cx="7" cy="1" r="0.8" fill="#dcdcdc"/></svg>
<div class="t " style="left:279px;top:126.30000000000001px;color:#d8d8d8;font-size:7.1px">Bunny</div>
<svg style="left:661px;top:125.3px" width="9" height="9" viewBox="0 0 9 9"><path d="M0 3.2h8.4V9H0z" fill="#d6d6d6"/><path d="M0 2.6L8 0l0.5 1.6L0.4 4.1z" fill="#d6d6d6"/><path d="M1.5 2.2l1.2 1.1 M3.8 1.5l1.2 1.1 M6.1 0.8l1.2 1.1" stroke="#333" stroke-width="0.9"/><path d="M1 5.2h6.4" stroke="#666" stroke-width="0.6"/></svg>
<svg style="left:671.5px;top:133.5px" width="3" height="2" viewBox="0 0 3 2"><path d="M0 2h3V0z" fill="#ccc"/></svg>
<svg style="left:681px;top:125.3px" width="9" height="9" viewBox="0 0 9 9"><path d="M0.5 8L4.5 1L8.5 8z" fill="#9a9a9a"/><circle cx="3.4" cy="6.2" r="2" fill="#d8d8d8"/><circle cx="6" cy="2.2" r="1.3" fill="#cfcfcf"/></svg>
<svg style="left:691.5px;top:133.5px" width="3" height="2" viewBox="0 0 3 2"><path d="M0 2h3V0z" fill="#ccc"/></svg>
<svg style="left:698.5px;top:125.6px" width="9" height="9" viewBox="0 0 9 9"><circle cx="4.5" cy="4.5" r="2.6" fill="none" stroke="#d0d0d0" stroke-width="0.9"/><path d="M4.5 0v9M0 4.5h9" stroke="#d0d0d0" stroke-width="0.9"/></svg>
<div class="a" style="left:715px;top:126px;width:34px;height:8.5px;background:#b4b4b4;border:1px solid #1f1f1f"></div>
<div class="t " style="left:718px;top:125.80000000000001px;color:#1a1a1a;font-size:7.6px">100%</div>
<div class="a" style="left:749px;top:126px;width:12px;height:8.5px;background:#4e4e4e;border:1px solid #252525;border-left:none"></div>
<svg style="left:752.5px;top:129px" width="5" height="3" viewBox="0 0 5 3"><path d="M0 0h5L2.5 3z" fill="#e6e6e6"/></svg>
<!-- stage -->
<div class="a" style="left:198.4px;top:136.3px;width:567.6px;height:11px;background:#363636;"></div>
<div class="a" style="left:198.4px;top:146.8px;width:9.6px;height:253.2px;background:#3b3b3b;"></div>
<div class="a" style="left:207.8px;top:146.8px;width:550.5px;height:253.2px;background:#e4dfbf;"></div>
<div class="a" style="left:207.8px;top:382.7px;width:550.5px;height:0.9px;background:#84e6ea;"></div>
<div class="a" style="left:736.5px;top:146.8px;width:0.9px;height:253.2px;background:#8ce8ea;"></div>
<svg style="left:0;top:0" width="960" height="150" viewBox="0 0 960 150"><path d="M210.3 144.4V147.3" stroke="#a4a4a4" stroke-width="0.7"/><path d="M213.3 144.4V147.3" stroke="#a4a4a4" stroke-width="0.7"/><path d="M216.2 144.4V147.3" stroke="#a4a4a4" stroke-width="0.7"/><path d="M219.2 143.10000000000002V147.3" stroke="#a4a4a4" stroke-width="0.7"/><path d="M222.1 144.4V147.3" stroke="#a4a4a4" stroke-width="0.7"/><path d="M225.1 144.4V147.3" stroke="#a4a4a4" stroke-width="0.7"/><path d="M228.0 144.4V147.3" stroke="#a4a4a4" stroke-width="0.7"/><path d="M231.0 144.4V147.3" stroke="#a4a4a4" stroke-width="0.7"/><path d="M233.9 137V147.3" stroke="#a8a8a8" stroke-width="0.8"/><path d="M236.8 144.4V147.3" stroke="#a4a4a4" stroke-width="0.7"/><path d="M239.8 144.4V147.3" stroke="#a4a4a4" stroke-width="0.7"/><path d="M242.7 144.4V147.3" stroke="#a4a4a4" stroke-width="0.7"/><path d="M245.7 144.4V147.3" stroke="#a4a4a4" stroke-width="0.7"/><path d="M248.6 143.10000000000002V147.3" stroke="#a4a4a4" stroke-width="0.7"/><path d="M251.6 144.4V147.3" stroke="#a4a4a4" stroke-width="0.7"/><path d="M254.5 144.4V147.3" stroke="#a4a4a4" stroke-width="0.7"/><path d="M257.5 144.4V147.3" stroke="#a4a4a4" stroke-width="0.7"/><path d="M260.4 144.4V147.3" stroke="#a4a4a4" stroke-width="0.7"/><path d="M263.4 137V147.3" stroke="#a8a8a8" stroke-width="0.8"/><path d="M266.3 144.4V147.3" stroke="#a4a4a4" stroke-width="0.7"/><path d="M269.2 144.4V147.3" stroke="#a4a4a4" stroke-width="0.7"/><path d="M272.2 144.4V147.3" stroke="#a4a4a4" stroke-width="0.7"/><path d="M275.1 144.4V147.3" stroke="#a4a4a4" stroke-width="0.7"/><path d="M278.1 143.10000000000002V147.3" stroke="#a4a4a4" stroke-width="0.7"/><path d="M281.0 144.4V147.3" stroke="#a4a4a4" stroke-width="0.7"/><path d="M284.0 144.4V147.3" stroke="#a4a4a4" stroke-width="0.7"/><path d="M286.9 144.4V147.3" stroke="#a4a4a4" stroke-width="0.7"/><path d="M289.9 144.4V147.3" stroke="#a4a4a4" stroke-width="0.7"/><path d="M292.8 137V147.3" stroke="#a8a8a8" stroke-width="0.8"/><path d="M295.7 144.4V147.3" stroke="#a4a4a4" stroke-width="0.7"/><path d="M298.7 144.4V147.3" stroke="#a4a4a4" stroke-width="0.7"/><path d="M301.6 144.4V147.3" stroke="#a4a4a4" stroke-width="0.7"/><path d="M304.6 144.4V147.3" stroke="#a4a4a4" stroke-width="0.7"/><path d="M307.5 143.10000000000002V147.3" stroke="#a4a4a4" stroke-width="0.7"/><path d="M310.5 144.4V147.3" stroke="#a4a4a4" stroke-width="0.7"/><path d="M313.4 144.4V147.3" stroke="#a4a4a4" stroke-width="0.7"/><path d="M316.4 144.4V147.3" stroke="#a4a4a4" stroke-width="0.7"/><path d="M319.3 144.4V147.3" stroke="#a4a4a4" stroke-width="0.7"/><path d="M322.2 137V147.3" stroke="#a8a8a8" stroke-width="0.8"/><path d="M325.2 144.4V147.3" stroke="#a4a4a4" stroke-width="0.7"/><path d="M328.1 144.4V147.3" stroke="#a4a4a4" stroke-width="0.7"/><path d="M331.1 144.4V147.3" stroke="#a4a4a4" stroke-width="0.7"/><path d="M334.0 144.4V147.3" stroke="#a4a4a4" stroke-width="0.7"/><path d="M337.0 143.10000000000002V147.3" stroke="#a4a4a4" stroke-width="0.7"/><path d="M339.9 144.4V147.3" stroke="#a4a4a4" stroke-width="0.7"/><path d="M342.9 144.4V147.3" stroke="#a4a4a4" stroke-width="0.7"/><path d="M345.8 144.4V147.3" stroke="#a4a4a4" stroke-width="0.7"/><path d="M348.8 144.4V147.3" stroke="#a4a4a4" stroke-width="0.7"/><path d="M351.7 137V147.3" stroke="#a8a8a8" stroke-width="0.8"/><path d="M354.6 144.4V147.3" stroke="#a4a4a4" stroke-width="0.7"/><path d="M357.6 144.4V147.3" stroke="#a4a4a4" stroke-width="0.7"/><path d="M360.5 144.4V147.3" stroke="#a4a4a4" stroke-width="0.7"/><path d="M363.5 144.4V147.3" stroke="#a4a4a4" stroke-width="0.7"/><path d="M366.4 143.10000000000002V147.3" stroke="#a4a4a4" stroke-width="0.7"/><path d="M369.4 144.4V147.3" stroke="#a4a4a4" stroke-width="0.7"/><path d="M372.3 144.4V147.3" stroke="#a4a4a4" stroke-width="0.7"/><path d="M375.3 144.4V147.3" stroke="#a4a4a4" stroke-width="0.7"/><path d="M378.2 144.4V147.3" stroke="#a4a4a4" stroke-width="0.7"/><path d="M381.2 137V147.3" stroke="#a8a8a8" stroke-width="0.8"/><path d="M384.1 144.4V147.3" stroke="#a4a4a4" stroke-width="0.7"/><path d="M387.0 144.4V147.3" stroke="#a4a4a4" stroke-width="0.7"/><path d="M390.0 144.4V147.3" stroke="#a4a4a4" stroke-width="0.7"/><path d="M392.9 144.4V147.3" stroke="#a4a4a4" stroke-width="0.7"/><path d="M395.9 143.10000000000002V147.3" stroke="#a4a4a4" stroke-width="0.7"/><path d="M398.8 144.4V147.3" stroke="#a4a4a4" stroke-width="0.7"/><path d="M401.8 144.4V147.3" stroke="#a4a4a4" stroke-width="0.7"/><path d="M404.7 144.4V147.3" stroke="#a4a4a4" stroke-width="0.7"/><path d="M407.7 144.4V147.3" stroke="#a4a4a4" stroke-width="0.7"/><path d="M410.6 137V147.3" stroke="#a8a8a8" stroke-width="0.8"/><path d="M413.5 144.4V147.3" stroke="#a4a4a4" stroke-width="0.7"/><path d="M416.5 144.4V147.3" stroke="#a4a4a4" stroke-width="0.7"/><path d="M419.4 144.4V147.3" stroke="#a4a4a4" stroke-width="0.7"/><path d="M422.4 144.4V147.3" stroke="#a4a4a4" stroke-width="0.7"/><path d="M425.3 143.10000000000002V147.3" stroke="#a4a4a4" stroke-width="0.7"/><path d="M428.3 144.4V147.3" stroke="#a4a4a4" stroke-width="0.7"/><path d="M431.2 144.4V147.3" stroke="#a4a4a4" stroke-width="0.7"/><path d="M434.2 144.4V147.3" stroke="#a4a4a4" stroke-width="0.7"/><path d="M437.1 144.4V147.3" stroke="#a4a4a4" stroke-width="0.7"/><path d="M440.1 137V147.3" stroke="#a8a8a8" stroke-width="0.8"/><path d="M443.0 144.4V147.3" stroke="#a4a4a4" stroke-width="0.7"/><path d="M445.9 144.4V147.3" stroke="#a4a4a4" stroke-width="0.7"/><path d="M448.9 144.4V147.3" stroke="#a4a4a4" stroke-width="0.7"/><path d="M451.8 144.4V147.3" stroke="#a4a4a4" stroke-width="0.7"/><path d="M454.8 143.10000000000002V147.3" stroke="#a4a4a4" stroke-width="0.7"/><path d="M457.7 144.4V147.3" stroke="#a4a4a4" stroke-width="0.7"/><path d="M460.7 144.4V147.3" stroke="#a4a4a4" stroke-width="0.7"/><path d="M463.6 144.4V147.3" stroke="#a4a4a4" stroke-width="0.7"/><path d="M466.6 144.4V147.3" stroke="#a4a4a4" stroke-width="0.7"/><path d="M469.5 137V147.3" stroke="#a8a8a8" stroke-width="0.8"/><path d="M472.4 144.4V147.3" stroke="#a4a4a4" stroke-width="0.7"/><path d="M475.4 144.4V147.3" stroke="#a4a4a4" stroke-width="0.7"/><path d="M478.3 144.4V147.3" stroke="#a4a4a4" stroke-width="0.7"/><path d="M481.3 144.4V147.3" stroke="#a4a4a4" stroke-width="0.7"/><path d="M484.2 143.10000000000002V147.3" stroke="#a4a4a4" stroke-width="0.7"/><path d="M487.2 144.4V147.3" stroke="#a4a4a4" stroke-width="0.7"/><path d="M490.1 144.4V147.3" stroke="#a4a4a4" stroke-width="0.7"/><path d="M493.1 144.4V147.3" stroke="#a4a4a4" stroke-width="0.7"/><path d="M496.0 144.4V147.3" stroke="#a4a4a4" stroke-width="0.7"/><path d="M499.0 137V147.3" stroke="#a8a8a8" stroke-width="0.8"/><path d="M501.9 144.4V147.3" stroke="#a4a4a4" stroke-width="0.7"/><path d="M504.8 144.4V147.3" stroke="#a4a4a4" stroke-width="0.7"/><path d="M507.8 144.4V147.3" stroke="#a4a4a4" stroke-width="0.7"/><path d="M510.7 144.4V147.3" stroke="#a4a4a4" stroke-width="0.7"/><path d="M513.7 143.10000000000002V147.3" stroke="#a4a4a4" stroke-width="0.7"/><path d="M516.6 144.4V147.3" stroke="#a4a4a4" stroke-width="0.7"/><path d="M519.6 144.4V147.3" stroke="#a4a4a4" stroke-width="0.7"/><path d="M522.5 144.4V147.3" stroke="#a4a4a4" stroke-width="0.7"/><path d="M525.5 144.4V147.3" stroke="#a4a4a4" stroke-width="0.7"/><path d="M528.4 137V147.3" stroke="#a8a8a8" stroke-width="0.8"/><path d="M531.3 144.4V147.3" stroke="#a4a4a4" stroke-width="0.7"/><path d="M534.3 144.4V147.3" stroke="#a4a4a4" stroke-width="0.7"/><path d="M537.2 144.4V147.3" stroke="#a4a4a4" stroke-width="0.7"/><path d="M540.2 144.4V147.3" stroke="#a4a4a4" stroke-width="0.7"/><path d="M543.1 143.10000000000002V147.3" stroke="#a4a4a4" stroke-width="0.7"/><path d="M546.1 144.4V147.3" stroke="#a4a4a4" stroke-width="0.7"/><path d="M549.0 144.4V147.3" stroke="#a4a4a4" stroke-width="0.7"/><path d="M552.0 144.4V147.3" stroke="#a4a4a4" stroke-width="0.7"/><path d="M554.9 144.4V147.3" stroke="#a4a4a4" stroke-width="0.7"/><path d="M557.9 137V147.3" stroke="#a8a8a8" stroke-width="0.8"/><path d="M560.8 144.4V147.3" stroke="#a4a4a4" stroke-width="0.7"/><path d="M563.7 144.4V147.3" stroke="#a4a4a4" stroke-width="0.7"/><path d="M566.7 144.4V147.3" stroke="#a4a4a4" stroke-width="0.7"/><path d="M569.6 144.4V147.3" stroke="#a4a4a4" stroke-width="0.7"/><path d="M572.6 143.10000000000002V147.3" stroke="#a4a4a4" stroke-width="0.7"/><path d="M575.5 144.4V147.3" stroke="#a4a4a4" stroke-width="0.7"/><path d="M578.5 144.4V147.3" stroke="#a4a4a4" stroke-width="0.7"/><path d="M581.4 144.4V147.3" stroke="#a4a4a4" stroke-width="0.7"/><path d="M584.4 144.4V147.3" stroke="#a4a4a4" stroke-width="0.7"/><path d="M587.3 137V147.3" stroke="#a8a8a8" stroke-width="0.8"/><path d="M590.2 144.4V147.3" stroke="#a4a4a4" stroke-width="0.7"/><path d="M593.2 144.4V147.3" stroke="#a4a4a4" stroke-width="0.7"/><path d="M596.1 144.4V147.3" stroke="#a4a4a4" stroke-width="0.7"/><path d="M599.1 144.4V147.3" stroke="#a4a4a4" stroke-width="0.7"/><path d="M602.0 143.10000000000002V147.3" stroke="#a4a4a4" stroke-width="0.7"/><path d="M605.0 144.4V147.3" stroke="#a4a4a4" stroke-width="0.7"/><path d="M607.9 144.4V147.3" stroke="#a4a4a4" stroke-width="0.7"/><path d="M610.9 144.4V147.3" stroke="#a4a4a4" stroke-width="0.7"/><path d="M613.8 144.4V147.3" stroke="#a4a4a4" stroke-width="0.7"/><path d="M616.8 137V147.3" stroke="#a8a8a8" stroke-width="0.8"/><path d="M619.7 144.4V147.3" stroke="#a4a4a4" stroke-width="0.7"/><path d="M622.6 144.4V147.3" stroke="#a4a4a4" stroke-width="0.7"/><path d="M625.6 144.4V147.3" stroke="#a4a4a4" stroke-width="0.7"/><path d="M628.5 144.4V147.3" stroke="#a4a4a4" stroke-width="0.7"/><path d="M631.5 143.10000000000002V147.3" stroke="#a4a4a4" stroke-width="0.7"/><path d="M634.4 144.4V147.3" stroke="#a4a4a4" stroke-width="0.7"/><path d="M637.4 144.4V147.3" stroke="#a4a4a4" stroke-width="0.7"/><path d="M640.3 144.4V147.3" stroke="#a4a4a4" stroke-width="0.7"/><path d="M643.3 144.4V147.3" stroke="#a4a4a4" stroke-width="0.7"/><path d="M646.2 137V147.3" stroke="#a8a8a8" stroke-width="0.8"/><path d="M649.1 144.4V147.3" stroke="#a4a4a4" stroke-width="0.7"/><path d="M652.1 144.4V147.3" stroke="#a4a4a4" stroke-width="0.7"/><path d="M655.0 144.4V147.3" stroke="#a4a4a4" stroke-width="0.7"/><path d="M658.0 144.4V147.3" stroke="#a4a4a4" stroke-width="0.7"/><path d="M660.9 143.10000000000002V147.3" stroke="#a4a4a4" stroke-width="0.7"/><path d="M663.9 144.4V147.3" stroke="#a4a4a4" stroke-width="0.7"/><path d="M666.8 144.4V147.3" stroke="#a4a4a4" stroke-width="0.7"/><path d="M669.8 144.4V147.3" stroke="#a4a4a4" stroke-width="0.7"/><path d="M672.7 144.4V147.3" stroke="#a4a4a4" stroke-width="0.7"/><path d="M675.7 137V147.3" stroke="#a8a8a8" stroke-width="0.8"/><path d="M678.6 144.4V147.3" stroke="#a4a4a4" stroke-width="0.7"/><path d="M681.5 144.4V147.3" stroke="#a4a4a4" stroke-width="0.7"/><path d="M684.5 144.4V147.3" stroke="#a4a4a4" stroke-width="0.7"/><path d="M687.4 144.4V147.3" stroke="#a4a4a4" stroke-width="0.7"/><path d="M690.4 143.10000000000002V147.3" stroke="#a4a4a4" stroke-width="0.7"/><path d="M693.3 144.4V147.3" stroke="#a4a4a4" stroke-width="0.7"/><path d="M696.3 144.4V147.3" stroke="#a4a4a4" stroke-width="0.7"/><path d="M699.2 144.4V147.3" stroke="#a4a4a4" stroke-width="0.7"/><path d="M702.2 144.4V147.3" stroke="#a4a4a4" stroke-width="0.7"/><path d="M705.1 137V147.3" stroke="#a8a8a8" stroke-width="0.8"/><path d="M708.0 144.4V147.3" stroke="#a4a4a4" stroke-width="0.7"/><path d="M711.0 144.4V147.3" stroke="#a4a4a4" stroke-width="0.7"/><path d="M713.9 144.4V147.3" stroke="#a4a4a4" stroke-width="0.7"/><path d="M716.9 144.4V147.3" stroke="#a4a4a4" stroke-width="0.7"/><path d="M719.8 143.10000000000002V147.3" stroke="#a4a4a4" stroke-width="0.7"/><path d="M722.8 144.4V147.3" stroke="#a4a4a4" stroke-width="0.7"/><path d="M725.7 144.4V147.3" stroke="#a4a4a4" stroke-width="0.7"/><path d="M728.7 144.4V147.3" stroke="#a4a4a4" stroke-width="0.7"/><path d="M731.6 144.4V147.3" stroke="#a4a4a4" stroke-width="0.7"/><path d="M734.5 137V147.3" stroke="#a8a8a8" stroke-width="0.8"/><path d="M737.5 144.4V147.3" stroke="#a4a4a4" stroke-width="0.7"/><path d="M740.4 144.4V147.3" stroke="#a4a4a4" stroke-width="0.7"/><path d="M743.4 144.4V147.3" stroke="#a4a4a4" stroke-width="0.7"/><path d="M746.3 144.4V147.3" stroke="#a4a4a4" stroke-width="0.7"/><path d="M749.3 143.10000000000002V147.3" stroke="#a4a4a4" stroke-width="0.7"/><path d="M752.2 144.4V147.3" stroke="#a4a4a4" stroke-width="0.7"/><path d="M755.2 144.4V147.3" stroke="#a4a4a4" stroke-width="0.7"/></svg>
<div class="a" style="left:208px;top:137.5px;width:550px;height:10px;overflow:hidden">
<div class="t" style="left:-2.3px;top:-0.8px;color:#bebebe;font-size:7.4px">350</div>
<div class="t" style="left:27.1px;top:-0.8px;color:#bebebe;font-size:7.4px">300</div>
<div class="t" style="left:56.6px;top:-0.8px;color:#bebebe;font-size:7.4px">250</div>
<div class="t" style="left:86.0px;top:-0.8px;color:#bebebe;font-size:7.4px">200</div>
<div class="t" style="left:115.4px;top:-0.8px;color:#bebebe;font-size:7.4px">150</div>
<div class="t" style="left:144.9px;top:-0.8px;color:#bebebe;font-size:7.4px">100</div>
<div class="t" style="left:174.4px;top:-0.8px;color:#bebebe;font-size:7.4px">50</div>
<div class="t" style="left:203.8px;top:-0.8px;color:#bebebe;font-size:7.4px">0</div>
<div class="t" style="left:233.2px;top:-0.8px;color:#bebebe;font-size:7.4px">50</div>
<div class="t" style="left:262.7px;top:-0.8px;color:#bebebe;font-size:7.4px">100</div>
<div class="t" style="left:292.2px;top:-0.8px;color:#bebebe;font-size:7.4px">150</div>
<div class="t" style="left:321.6px;top:-0.8px;color:#bebebe;font-size:7.4px">200</div>
<div class="t" style="left:351.1px;top:-0.8px;color:#bebebe;font-size:7.4px">250</div>
<div class="t" style="left:380.5px;top:-0.8px;color:#bebebe;font-size:7.4px">300</div>
<div class="t" style="left:410.0px;top:-0.8px;color:#bebebe;font-size:7.4px">350</div>
<div class="t" style="left:439.4px;top:-0.8px;color:#bebebe;font-size:7.4px">400</div>
<div class="t" style="left:468.9px;top:-0.8px;color:#bebebe;font-size:7.4px">450</div>
<div class="t" style="left:498.3px;top:-0.8px;color:#bebebe;font-size:7.4px">500</div>
<div class="t" style="left:527.8px;top:-0.8px;color:#bebebe;font-size:7.4px">550</div>
<div class="t" style="left:557.2px;top:-0.8px;color:#bebebe;font-size:7.4px">600</div>
</div>
<div class="a" style="left:656.6px;top:138px;width:1px;height:9.3px;background:#e02020;"></div>
<svg style="left:0;top:0" width="960" height="400" viewBox="0 0 960 400"><clipPath id="vr"><rect x="198" y="147.3" width="10" height="253"/></clipPath><g clip-path="url(#vr)"><path d="M198.6 383.3H208" stroke="#9c9c9c" stroke-width="0.7"/><path d="M205.1 356.8H208" stroke="#a4a4a4" stroke-width="0.7"/><path d="M205.1 359.7H208" stroke="#a4a4a4" stroke-width="0.7"/><path d="M205.1 362.7H208" stroke="#a4a4a4" stroke-width="0.7"/><path d="M205.1 365.6H208" stroke="#a4a4a4" stroke-width="0.7"/><path d="M203.8 368.6H208" stroke="#a4a4a4" stroke-width="0.7"/><path d="M205.1 371.5H208" stroke="#a4a4a4" stroke-width="0.7"/><path d="M205.1 374.5H208" stroke="#a4a4a4" stroke-width="0.7"/><path d="M205.1 377.4H208" stroke="#a4a4a4" stroke-width="0.7"/><path d="M205.1 380.4H208" stroke="#a4a4a4" stroke-width="0.7"/><path d="M205.1 386.2H208" stroke="#a4a4a4" stroke-width="0.7"/><path d="M205.1 389.2H208" stroke="#a4a4a4" stroke-width="0.7"/><path d="M205.1 392.1H208" stroke="#a4a4a4" stroke-width="0.7"/><path d="M205.1 395.1H208" stroke="#a4a4a4" stroke-width="0.7"/><path d="M203.8 398.0H208" stroke="#a4a4a4" stroke-width="0.7"/><text transform="translate(203.6 384.1) rotate(-90)" text-anchor="end" font-size="7.8" fill="#bebebe" font-family="Liberation Sans, sans-serif">0</text><path d="M198.6 353.9H208" stroke="#9c9c9c" stroke-width="0.7"/><path d="M205.1 327.3H208" stroke="#a4a4a4" stroke-width="0.7"/><path d="M205.1 330.3H208" stroke="#a4a4a4" stroke-width="0.7"/><path d="M205.1 333.2H208" stroke="#a4a4a4" stroke-width="0.7"/><path d="M205.1 336.2H208" stroke="#a4a4a4" stroke-width="0.7"/><path d="M203.8 339.1H208" stroke="#a4a4a4" stroke-width="0.7"/><path d="M205.1 342.1H208" stroke="#a4a4a4" stroke-width="0.7"/><path d="M205.1 345.0H208" stroke="#a4a4a4" stroke-width="0.7"/><path d="M205.1 348.0H208" stroke="#a4a4a4" stroke-width="0.7"/><path d="M205.1 350.9H208" stroke="#a4a4a4" stroke-width="0.7"/><text transform="translate(203.6 354.7) rotate(-90)" text-anchor="end" font-size="7.8" fill="#bebebe" font-family="Liberation Sans, sans-serif">50</text><path d="M198.6 324.4H208" stroke="#9c9c9c" stroke-width="0.7"/><path d="M205.1 297.9H208" stroke="#a4a4a4" stroke-width="0.7"/><path d="M205.1 300.8H208" stroke="#a4a4a4" stroke-width="0.7"/><path d="M205.1 303.8H208" stroke="#a4a4a4" stroke-width="0.7"/><path d="M205.1 306.7H208" stroke="#a4a4a4" stroke-width="0.7"/><path d="M203.8 309.7H208" stroke="#a4a4a4" stroke-width="0.7"/><path d="M205.1 312.6H208" stroke="#a4a4a4" stroke-width="0.7"/><path d="M205.1 315.6H208" stroke="#a4a4a4" stroke-width="0.7"/><path d="M205.1 318.5H208" stroke="#a4a4a4" stroke-width="0.7"/><path d="M205.1 321.5H208" stroke="#a4a4a4" stroke-width="0.7"/><text transform="translate(203.6 325.2) rotate(-90)" text-anchor="end" font-size="7.8" fill="#bebebe" font-family="Liberation Sans, sans-serif">100</text><path d="M198.6 295.0H208" stroke="#9c9c9c" stroke-width="0.7"/><path d="M205.1 268.4H208" stroke="#a4a4a4" stroke-width="0.7"/><path d="M205.1 271.4H208" stroke="#a4a4a4" stroke-width="0.7"/><path d="M205.1 274.3H208" stroke="#a4a4a4" stroke-width="0.7"/><path d="M205.1 277.3H208" stroke="#a4a4a4" stroke-width="0.7"/><path d="M203.8 280.2H208" stroke="#a4a4a4" stroke-width="0.7"/><path d="M205.1 283.2H208" stroke="#a4a4a4" stroke-width="0.7"/><path d="M205.1 286.1H208" stroke="#a4a4a4" stroke-width="0.7"/><path d="M205.1 289.1H208" stroke="#a4a4a4" stroke-width="0.7"/><path d="M205.1 292.0H208" stroke="#a4a4a4" stroke-width="0.7"/><text transform="translate(203.6 295.8) rotate(-90)" text-anchor="end" font-size="7.8" fill="#bebebe" font-family="Liberation Sans, sans-serif">150</text><path d="M198.6 265.5H208" stroke="#9c9c9c" stroke-width="0.7"/><path d="M205.1 239.0H208" stroke="#a4a4a4" stroke-width="0.7"/><path d="M205.1 241.9H208" stroke="#a4a4a4" stroke-width="0.7"/><path d="M205.1 244.9H208" stroke="#a4a4a4" stroke-width="0.7"/><path d="M205.1 247.8H208" stroke="#a4a4a4" stroke-width="0.7"/><path d="M203.8 250.8H208" stroke="#a4a4a4" stroke-width="0.7"/><path d="M205.1 253.7H208" stroke="#a4a4a4" stroke-width="0.7"/><path d="M205.1 256.7H208" stroke="#a4a4a4" stroke-width="0.7"/><path d="M205.1 259.6H208" stroke="#a4a4a4" stroke-width="0.7"/><path d="M205.1 262.6H208" stroke="#a4a4a4" stroke-width="0.7"/><text transform="translate(203.6 266.3) rotate(-90)" text-anchor="end" font-size="7.8" fill="#bebebe" font-family="Liberation Sans, sans-serif">200</text><path d="M198.6 236.1H208" stroke="#9c9c9c" stroke-width="0.7"/><path d="M205.1 209.5H208" stroke="#a4a4a4" stroke-width="0.7"/><path d="M205.1 212.5H208" stroke="#a4a4a4" stroke-width="0.7"/><path d="M205.1 215.4H208" stroke="#a4a4a4" stroke-width="0.7"/><path d="M205.1 218.4H208" stroke="#a4a4a4" stroke-width="0.7"/><path d="M203.8 221.3H208" stroke="#a4a4a4" stroke-width="0.7"/><path d="M205.1 224.3H208" stroke="#a4a4a4" stroke-width="0.7"/><path d="M205.1 227.2H208" stroke="#a4a4a4" stroke-width="0.7"/><path d="M205.1 230.2H208" stroke="#a4a4a4" stroke-width="0.7"/><path d="M205.1 233.1H208" stroke="#a4a4a4" stroke-width="0.7"/><text transform="translate(203.6 236.9) rotate(-90)" text-anchor="end" font-size="7.8" fill="#bebebe" font-family="Liberation Sans, sans-serif">250</text><path d="M198.6 206.6H208" stroke="#9c9c9c" stroke-width="0.7"/><path d="M205.1 180.1H208" stroke="#a4a4a4" stroke-width="0.7"/><path d="M205.1 183.0H208" stroke="#a4a4a4" stroke-width="0.7"/><path d="M205.1 186.0H208" stroke="#a4a4a4" stroke-width="0.7"/><path d="M205.1 188.9H208" stroke="#a4a4a4" stroke-width="0.7"/><path d="M203.8 191.9H208" stroke="#a4a4a4" stroke-width="0.7"/><path d="M205.1 194.8H208" stroke="#a4a4a4" stroke-width="0.7"/><path d="M205.1 197.8H208" stroke="#a4a4a4" stroke-width="0.7"/><path d="M205.1 200.7H208" stroke="#a4a4a4" stroke-width="0.7"/><path d="M205.1 203.7H208" stroke="#a4a4a4" stroke-width="0.7"/><text transform="translate(203.6 207.4) rotate(-90)" text-anchor="end" font-size="7.8" fill="#bebebe" font-family="Liberation Sans, sans-serif">300</text><path d="M198.6 177.2H208" stroke="#9c9c9c" stroke-width="0.7"/><path d="M205.1 150.6H208" stroke="#a4a4a4" stroke-width="0.7"/><path d="M205.1 153.6H208" stroke="#a4a4a4" stroke-width="0.7"/><path d="M205.1 156.5H208" stroke="#a4a4a4" stroke-width="0.7"/><path d="M205.1 159.5H208" stroke="#a4a4a4" stroke-width="0.7"/><path d="M203.8 162.4H208" stroke="#a4a4a4" stroke-width="0.7"/><path d="M205.1 165.4H208" stroke="#a4a4a4" stroke-width="0.7"/><path d="M205.1 168.3H208" stroke="#a4a4a4" stroke-width="0.7"/><path d="M205.1 171.3H208" stroke="#a4a4a4" stroke-width="0.7"/><path d="M205.1 174.2H208" stroke="#a4a4a4" stroke-width="0.7"/><text transform="translate(203.6 178.0) rotate(-90)" text-anchor="end" font-size="7.8" fill="#bebebe" font-family="Liberation Sans, sans-serif">350</text><path d="M198.6 147.7H208" stroke="#9c9c9c" stroke-width="0.7"/><text transform="translate(203.6 148.5) rotate(-90)" text-anchor="end" font-size="7.8" fill="#bebebe" font-family="Liberation Sans, sans-serif">400</text></g></svg>
<div class="a" style="left:198.4px;top:277.8px;width:9.6px;height:1px;background:#e02020;"></div>
<div class="a" style="left:758.3px;top:136.3px;width:7.5px;height:263.7px;background:#3a3a3a;border-left:1.4px solid #2a2a2a"></div>
<div class="a" style="left:759.7px;top:217.5px;width:5.8px;height:121.5px;background:#484848;"></div>
<div class="a" style="left:758.3px;top:136.3px;width:7.5px;height:11px;background:#3e3e3e;"></div>
<svg style="left:760px;top:150.5px" width="5" height="3" viewBox="0 0 5 3"><path d="M0 3h5L2.5 0z" fill="#e6e6e6"/></svg>
<svg style="left:0;top:0" width="960" height="400" viewBox="0 0 960 400">
<g id="bunny" stroke-linejoin="round" stroke-linecap="round">
<!-- left ear -->
<path d="M432.4 255.3C434 248.5 448 247.6 459 251.2C473 256 483.5 270 489 288L482 292C466 291.5 451 283 441 271.5C435 264.5 431.6 259.5 432.4 255.3Z" fill="#27b9ea" stroke="#0b0b0b" stroke-width="3"/>
<path d="M447 265.5C458 265 471 270 482.5 287.5L481.5 290.5C466 290 451 282 442 271C444 268 445 266 447 265.5Z" fill="#1797c8"/>
<path d="M447.5 265.6C459 265.5 472 271 482.8 286.5" fill="none" stroke="#0b0b0b" stroke-width="1.5"/>
<!-- right ear -->
<path d="M481.8 242.6C486 239.8 497 242.6 507 251.6C517 261 524 274 525.8 290.5L516.5 290C503 284 491 272 484.5 259.5C481 252.5 479.8 245.4 481.8 242.6Z" fill="#27b9ea" stroke="#0b0b0b" stroke-width="3"/>
<path d="M484 246C487 255 494 264 503 271.5C509 276.5 516 281 522.5 283.5L522 288.6C506 283.5 492.5 272 486 259.5C483.6 254.5 482.6 249.5 484 246Z" fill="#1797c8"/>
<!-- left arm -->
<path d="M470 326.5L456 334L452 343L463 349L474 338Z" fill="#27b9ea" stroke="#0b0b0b" stroke-width="2.2"/>
<!-- body -->
<path d="M471 332L529 338L531 350L524.5 370.5L476 371L469.5 352Z" fill="#464646" stroke="#0b0b0b" stroke-width="2.4"/>
<path d="M489.5 343.6L495 342.4L507 359.5L503 363.5Z" fill="#747474"/>
<path d="M513 341.6L519.6 342.6L504.5 364.2L497.5 364.2Z" fill="#7c7c7c"/>
<path d="M513 341.6L497.5 364.2" fill="none" stroke="#333" stroke-width="1"/>
<path d="M495 342.4L505 356.5" fill="none" stroke="#333" stroke-width="0.8"/>
<path d="M476.5 363.5H523.5L522 370H478.5Z" fill="#696969"/>
<path d="M476.5 363.5H523.5" stroke="#333" stroke-width="0.9"/>
<!-- legs / feet -->
<path d="M480 370H494V376L494.5 382.4H470.5C470 378 474 374.5 480 374Z" fill="#0b0b0b" stroke="#0b0b0b" stroke-width="1.2"/>
<path d="M507 370H521V374C526 374.5 529.5 378 529.5 382.4H505.5Z" fill="#0b0b0b" stroke="#0b0b0b" stroke-width="1.2"/>
<!-- head -->
<path d="M485.6 290.2L532.2 293.8L537.6 339.4L483 344L469.6 322Z" fill="#27b9ea" stroke="#0b0b0b" stroke-width="2.6"/>
<path d="M485.6 290.2L478 314.5C477 320 478.5 333 483 344L469.6 322Z" fill="#1797c8"/>
<path d="M485.6 290.2L469.6 322L483 344" fill="none" stroke="#0b0b0b" stroke-width="2.6"/>
<path d="M486 291.5L478.2 314.5C477 322 479.5 333 483 343" fill="none" stroke="#0d4f70" stroke-width="0.9"/>
<path d="M484.5 289.4L529 292.4" stroke="#0b0b0b" stroke-width="3.4"/>
<!-- smile -->
<path d="M477 317.5C484 318 490 323.5 497.5 327.8C503.5 330.6 510 329.6 515 326.8" fill="none" stroke="#0b0b0b" stroke-width="1.7"/>
<path d="M487.5 315.5C488.5 318 488.3 320.5 487 322.5" fill="none" stroke="#0b0b0b" stroke-width="1.3"/>
<!-- eyes -->
<ellipse cx="503" cy="308.2" rx="8.4" ry="5.8" fill="#f6f6f6" stroke="#0b0b0b" stroke-width="1.6"/>
<ellipse cx="528.2" cy="310.6" rx="7.4" ry="5.6" fill="#f6f6f6" stroke="#0b0b0b" stroke-width="1.6"/>
<path d="M497 311.4C500 314 505.5 314 508.5 311.8" fill="none" stroke="#c9c9c9" stroke-width="1.2"/>
<path d="M523.6 313.6C526.4 315.6 531 315.6 533.6 313.8" fill="none" stroke="#c9c9c9" stroke-width="1.2"/>
<circle cx="510" cy="307.8" r="2.2" fill="#0b0b0b"/>
<circle cx="533.4" cy="310" r="2.1" fill="#0b0b0b"/>
<!-- brows -->
<path d="M488 295.6C498 293.2 512 294.6 521 299C528 298 536 298.6 542.4 300.4L541.8 308.2C535 306.2 527 306 520.4 307.6C511 303.4 499 302.6 489.8 304.8Z" fill="#0b0b0b" stroke="#0b0b0b" stroke-width="1"/>
<!-- mouth -->
<path d="M513.2 320.4C517 319.4 523 320 526.6 321.2C525 325.4 521 327.4 518 326.6C515.6 325.8 513.8 323.6 513.2 320.4Z" fill="#e8687c" stroke="#0b0b0b" stroke-width="1.3"/>
<!-- left glove + fingers -->
<path d="M442.5 357L441 365L445.5 372L452 374.5L455.5 371L461.5 373.5L469 368L473 358.5L462 352Z" fill="#27b9ea" stroke="#0b0b0b" stroke-width="2"/>
<path d="M449 362L452 369 M457 361L460.5 368" stroke="#0b0b0b" stroke-width="1.2"/>
<path d="M456.5 335.5L468 340.5L466 346C471 349 473.5 354 472.5 358.5C468 363 461 362 456 359.5C452 362.5 445.5 361.5 442 357.5C439.5 353 440.5 346.5 445.5 342.5C448 339 452 336.5 456.5 335.5Z" fill="#a9702f" stroke="#0b0b0b" stroke-width="2.2"/>
<path d="M455.5 337.5L466 342.5" stroke="#7e4c1c" stroke-width="1.4"/>
<path d="M447 350C452 349 458 351.5 461 356" fill="none" stroke="#7e4c1c" stroke-width="1.1"/>
<!-- right glove + fist -->
<path d="M531 343.5L538 342L549 344.5L558 350L561 357L548 362L537 362.5L530.5 355Z" fill="#a9702f" stroke="#0b0b0b" stroke-width="2.2"/>
<path d="M536 346C541 346 547 348.5 551 352.5" fill="none" stroke="#7e4c1c" stroke-width="1.1"/>
<path d="M535.5 362L545 354L555.5 350.5L563 353.5L565.4 358.5L561.5 367L548.5 377.5L540 373.5Z" fill="#27b9ea" stroke="#0b0b0b" stroke-width="2.2"/>
<path d="M543 364.5L553.5 357L556.5 361L547.5 368 M547.5 368L551.5 374 M556.5 361L561 365.5" fill="none" stroke="#0b0b0b" stroke-width="1.4"/>
<path d="M538.5 362.5L546 356.5" stroke="#5fd4f6" stroke-width="1.4"/>
</g></svg>
<svg style="left:407.5px;top:380px" width="6" height="6" viewBox="0 0 6 6"><path d="M3 0v6M0 3h6" stroke="#333" stroke-width="0.8"/></svg>
<div class="a" style="left:765.5px;top:0px;width:2.5px;height:400px;background:#272727;"></div>
<!-- right panel -->
<div class="a" style="left:768px;top:0px;width:192px;height:400px;background:#434343;"></div>
<div class="a" style="left:768px;top:8px;width:192px;height:12.5px;background:#494949;border-top:1px solid #2e2e2e;border-bottom:1px solid #2e2e2e"></div>
<svg style="left:771px;top:12.3px" width="5" height="3.4" viewBox="0 0 5 3.4"><path d="M0 0h5L2.5 3.4z" fill="#e4e4e4"/></svg>
<div class="t " style="left:779px;top:9.8px;color:#ececec">Fill and Stroke</div>
<svg style="left:798.5px;top:26.5px" width="9" height="9" viewBox="0 0 9 9"><path d="M0.8 8.4L1.6 6L6.4 1.2Q7.6 0.6 8.2 1.8L3.2 7.4z" fill="#dcdcdc"/></svg>
<div class="a" style="left:816.7px;top:26px;width:16.8px;height:8.3px;background:#85452c;border:1px solid #5a2e1e"></div>
<svg style="left:871px;top:26px" width="10" height="9.5" viewBox="0 0 10 9.5"><path d="M1 9L2.4 3.6L5 1L7.6 3.6L9 9L6.4 6L4.6 8.6z" fill="#d4d4d4"/><circle cx="5" cy="1.6" r="1.1" fill="#d4d4d4"/></svg>
<div class="a" style="left:887px;top:26px;width:17px;height:8.3px;background:linear-gradient(to bottom right,#d2d2d2 44%,#e04848 44%,#e04848 56%,#d2d2d2 56%);border:1px solid #8a8a8a"></div>
<div class="a" style="left:795.4px;top:44px;width:12.6px;height:12.6px;background:#2a2a2a;border:1px solid #191919"></div>
<svg style="left:798px;top:46.5px" width="8" height="8" viewBox="0 0 8 8"><rect x="0.5" y="1.5" width="7" height="6" fill="#8a8a8a" stroke="#cfcfcf" stroke-width="0.8"/><path d="M2.5 1.5V0.4h3v1.1" fill="none" stroke="#cfcfcf" stroke-width="0.8"/></svg>
<div class="t " style="left:813.8px;top:46.1px;color:#e4e4e4">Object drawing mode on</div>
<div class="t" style="left:760px;width:47.5px;text-align:right;top:66.3px;color:#dedede">Stroke:</div>
<div class="a" style="left:815.8px;top:69.6px;width:88px;height:2px;background:#1c1c1c;"></div>
<svg style="left:816.6px;top:67px" width="6" height="7.4" viewBox="0 0 6 7.4"><path d="M0.5 7V2.6L3 0.4L5.5 2.6V7z" fill="#6a6a6a" stroke="#2a2a2a" stroke-width="0.7"/></svg>
<div class="a" style="left:915px;top:67px;width:27.5px;height:8.3px;background:#c2c2c2;border:1px solid #8a8a8a"></div>
<div class="t " style="left:918px;top:66.7px;color:#1a1a1a">1.00</div>
<div class="t" style="left:760px;width:47.5px;text-align:right;top:83.0px;color:#dedede">Style:</div>
<svg style="left:816.5px;top:83px" width="8" height="9" viewBox="0 0 8 9"><rect x="2.6" y="5" width="2.8" height="3.6" fill="#dcdcdc"/><path d="M4 4.4V2.6 M1.6 4.6L0.8 3 M6.4 4.6L7.2 3 M2.6 1.6l-0.6-1.2 M5.4 1.6l0.6-1.2" stroke="#dcdcdc" stroke-width="0.9"/></svg>
<div class="a" style="left:832px;top:82.5px;width:111.5px;height:10.8px;background:#363636;border:1px solid #1e1e1e"></div>
<div class="a" style="left:839px;top:86.9px;width:89px;height:1.5px;background:#f2f2f2;"></div>
<svg style="left:936px;top:86.3px" width="5" height="3.2" viewBox="0 0 5 3.2"><path d="M0 0h5L2.5 3.2z" fill="#e0e0e0"/></svg>
<svg style="left:951px;top:83px" width="9" height="9" viewBox="0 0 9 9"><path d="M0.8 8.4L1.6 6L6.4 1.2Q7.6 0.6 8.2 1.8L3.2 7.4z" fill="#dcdcdc"/></svg>
<div class="t" style="left:760px;width:47.5px;text-align:right;top:99.3px;color:#dedede">Width:</div>
<div class="a" style="left:815px;top:98.4px;width:107.5px;height:10.8px;background:#363636;border:1px solid #1e1e1e"></div>
<div class="a" style="left:820.5px;top:100px;width:83.5px;height:7.6px;background:#ffffff;"></div>
<div class="a" style="left:820.5px;top:102.8px;width:83.5px;height:1.8px;background:#76f07a;"></div>
<svg style="left:915.5px;top:102.4px" width="5" height="3.2" viewBox="0 0 5 3.2"><path d="M0 0h5L2.5 3.2z" fill="#e0e0e0"/></svg>
<svg style="left:927.5px;top:100.5px" width="7" height="7" viewBox="0 0 7 7"><path d="M3.5 0v7M0 3.5h7" stroke="#5c5c5c" stroke-width="1.3"/></svg>
<svg style="left:941px;top:100.5px" width="7" height="7" viewBox="0 0 7 7"><path d="M0 3.5h7" stroke="#5c5c5c" stroke-width="1.3"/></svg>
<svg style="left:953px;top:100px" width="8" height="8" viewBox="0 0 8 8"><path d="M1.6 5.6A3 3 0 1 0 2 2.4" fill="none" stroke="#dcdcdc" stroke-width="1.2"/><path d="M0.4 1l3 0.4L1.4 4z" fill="#dcdcdc"/></svg>
<div class="t" style="left:760px;width:47.5px;text-align:right;top:115.5px;color:#dedede">Scale:</div>
<div class="a" style="left:815px;top:115px;width:95px;height:10.4px;background:#474747;border:1px solid #242424"></div>
<div class="t " style="left:818.5px;top:115.9px;color:#e4e4e4">Normal</div>
<svg style="left:903.5px;top:119px" width="5" height="3.2" viewBox="0 0 5 3.2"><path d="M0 0h5L2.5 3.2z" fill="#e0e0e0"/></svg>
<div class="a" style="left:914px;top:116px;width:7px;height:6.6px;background:#383838;border:1px solid #262626"></div>
<div class="t " style="left:923.5px;top:115.5px;color:#e4e4e4">Hinting</div>
<div class="t" style="left:760px;width:47.5px;text-align:right;top:133.8px;color:#dedede">Cap:</div>
<svg style="left:820.5px;top:134.5px" width="7" height="7.6" viewBox="0 0 7 7.6"><path d="M0.6 0.6h5.8M0.6 7h5.8" stroke="#dcdcdc" stroke-width="1"/><path d="M2 2.2h3.6v3.2H2z" fill="#dcdcdc"/><circle cx="2.2" cy="3.8" r="1.6" fill="#dcdcdc"/></svg>
<svg style="left:832.5px;top:137px" width="4.6" height="3" viewBox="0 0 4.6 3"><path d="M0 0h4.6L2.3 3z" fill="#e0e0e0"/></svg>
<div class="t" style="left:760px;width:47.5px;text-align:right;top:147.8px;color:#dedede">Join:</div>
<svg style="left:819.5px;top:148.5px" width="8" height="8" viewBox="0 0 8 8"><path d="M0.8 8V3.4Q0.8 0.8 3.4 0.8H8V4.4H4.4V8z" fill="#dcdcdc"/><path d="M3 8V4.6Q3 3 4.6 3H8" fill="none" stroke="#555" stroke-width="0.7"/></svg>
<svg style="left:831.5px;top:151px" width="4.6" height="3" viewBox="0 0 4.6 3"><path d="M0 0h4.6L2.3 3z" fill="#e0e0e0"/></svg>
<div class="t " style="left:888.8px;top:147.8px;color:#dedede">Miter:</div>
<div class="t " style="left:910px;top:147.8px;color:#7c7c7c">3.00</div>
<div class="a" style="left:768px;top:286px;width:192px;height:3.5px;background:#272727;"></div>
<div class="a" style="left:768px;top:288px;width:192px;height:11.5px;background:#2a2a2a;"></div>
<div class="a" style="left:768px;top:289.5px;width:27.6px;height:10px;background:#434343;"></div>
<div class="t b" style="left:771px;top:290.1px;color:#fff">Library</div>
<div class="t b" style="left:800px;top:290.1px;color:#c4c4c4">CC Libraries</div>
<div class="a" style="left:768px;top:299.5px;width:192px;height:16.5px;background:#383838;"></div>
<div class="a" style="left:771.4px;top:302.3px;width:167px;height:10px;background:#484848;border:1px solid #262626"></div>
<div class="t " style="left:775px;top:303.1px;color:#e4e4e4">bunny.fla</div>
<svg style="left:931.5px;top:306px" width="5" height="3.2" viewBox="0 0 5 3.2"><path d="M0 0h5L2.5 3.2z" fill="#e0e0e0"/></svg>
<svg style="left:944.5px;top:304.5px" width="9" height="6" viewBox="0 0 9 6"><path d="M0 3h3.4" stroke="#dcdcdc" stroke-width="1"/><path d="M3.4 1h4v4h-4z M7.4 0v6" fill="#dcdcdc" stroke="#dcdcdc" stroke-width="1"/></svg>
<div class="a" style="left:768px;top:315px;width:192px;height:1.2px;background:#2a2a2a;"></div>
<div class="a" style="left:768px;top:316px;width:192px;height:78.3px;background:#e4dfbf;"></div>
<div class="a" style="left:768px;top:394.3px;width:192px;height:5.7px;background:#363636;"></div>
<svg style="left:822.5px;top:390px" width="4" height="4.5" viewBox="0 0 4 4.5"><path d="M2 0v4.5M0 2.6h4" stroke="#444" stroke-width="0.7"/></svg>
<svg style="left:0;top:0" width="960" height="400" viewBox="0 0 960 400"><clipPath id="lc"><rect x="768" y="316" width="192" height="78.3"/></clipPath><g clip-path="url(#lc)"><use href="#bunny" transform="translate(610.5 194.7) scale(0.52)"/></g></svg>
</body>
</html>
